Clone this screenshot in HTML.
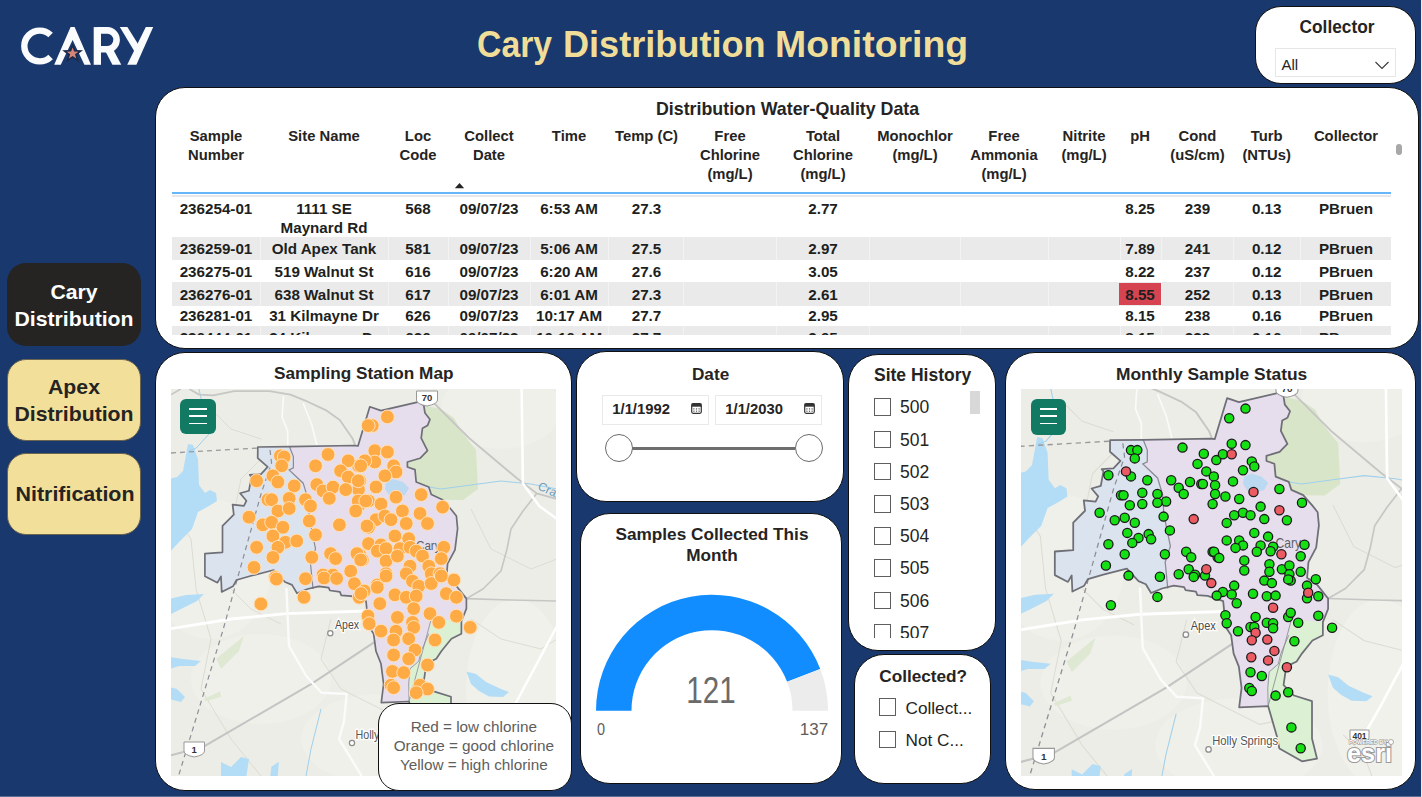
<!DOCTYPE html><html><head><meta charset="utf-8"><style>
html,body{margin:0;padding:0;}
body{width:1422px;height:797px;overflow:hidden;position:relative;background:#19386d;font-family:"Liberation Sans", sans-serif;}
.t{position:absolute;white-space:nowrap;line-height:1;}
.card{position:absolute;box-sizing:border-box;background:#fff;border:1.5px solid #101010;}
</style></head><body>
<div style="position:absolute;left:0px;top:796px;width:1422px;height:1px;background:#5b6f94;"></div>
<div style="position:absolute;left:1421px;top:0px;width:1px;height:797px;background:#e8ebf0;"></div>
<svg style="position:absolute;left:0;top:0" width="170" height="80" viewBox="0 0 170 80">
<path d="M50.6 35.1 A15.4 15.4 0 1 0 50.6 56.9" fill="none" stroke="#fafbfd" stroke-width="6.4"/>
<g fill="#fafbfd">
<polygon points="54.2,64.8 70.6,27.1 74.6,27.1 91,64.8 84.4,64.8 72.6,40 60.8,64.8"/>
<rect x="93.7" y="27.1" width="7.3" height="37.7"/>
<polygon points="104.5,49.5 113.2,49.5 121.3,64.8 112.4,64.8"/>
<polygon points="145.8,27.1 153.2,27.1 136.4,64.8 127.2,64.8"/>
<polygon points="119.8,27.1 127.4,27.1 139.6,46.5 135.4,53"/>
</g>
<path d="M97.3 30.4 H107.5 A9.1 9.45 0 0 1 107.5 49.3 H97.3" fill="none" stroke="#fafbfd" stroke-width="6.6"/>
<polygon points="72.6,43.5 75.3,50.1 83,50.3 76.9,55 79.2,62.3 72.6,58 66,62.3 68.3,55 62.2,50.3 69.9,50.1" fill="#1c2a48"/>
<polygon points="72.6,47.6 74.1,51.6 78.4,51.7 75,54.3 76.3,58.5 72.6,56 68.9,58.5 70.2,54.3 66.8,51.7 71.1,51.6" fill="#d4867a"/>
</svg>
<div class="t" style="left:477.00px;top:26.87px;font-size:36.3px;font-weight:700;color:#f0dd98;transform:scaleX(0.93);transform-origin:left 0;">Cary</div>
<div class="t" style="left:563.00px;top:26.87px;font-size:36.3px;font-weight:700;color:#f0dd98;transform:scaleX(0.995);transform-origin:left 0;">Distribution</div>
<div class="t" style="left:774.60px;top:26.87px;font-size:36.3px;font-weight:700;color:#f0dd98;transform:scaleX(1.03);transform-origin:left 0;">Monitoring</div>
<div class="card" style="left:1255px;top:6px;width:161px;height:77.5px;border-radius:26px;border-width:1.5px;"></div>
<div class="t" style="left:936.50px;width:800px;text-align:center;top:17.59px;font-size:18.2px;font-weight:700;color:#252423;transform:scaleX(0.95);transform-origin:center 0;">Collector</div>
<div style="position:absolute;left:1275px;top:48px;width:121px;height:29px;box-sizing:border-box;border:1px solid #e6e6e6;background:#fff;"></div>
<div class="t" style="left:1281.50px;top:57.10px;font-size:15px;font-weight:400;color:#252423;">All</div>
<svg style="position:absolute;left:1373px;top:58px" width="18" height="14"><path d="M2.5 4 L9 10.5 L15.5 4" fill="none" stroke="#3a3a3a" stroke-width="1.1"/></svg>
<div style="position:absolute;left:7px;top:263px;width:133.7px;height:83px;border-radius:19px;background:#252423;"></div>
<div class="t" style="left:-325.70px;width:800px;text-align:center;top:282.15px;font-size:20.5px;font-weight:700;color:#ffffff;transform:scaleX(1.035);transform-origin:center 0;">Cary</div>
<div class="t" style="left:-325.70px;width:800px;text-align:center;top:309.15px;font-size:20.5px;font-weight:700;color:#ffffff;transform:scaleX(1.035);transform-origin:center 0;">Distribution</div>
<div style="position:absolute;box-sizing:border-box;left:7px;top:359px;width:133.7px;height:81.5px;border-radius:19px;background:#f2df99;border:1px solid #6b6450;"></div>
<div class="t" style="left:-325.70px;width:800px;text-align:center;top:377.15px;font-size:20.5px;font-weight:700;color:#252423;transform:scaleX(1.035);transform-origin:center 0;">Apex</div>
<div class="t" style="left:-325.70px;width:800px;text-align:center;top:403.65px;font-size:20.5px;font-weight:700;color:#252423;transform:scaleX(1.035);transform-origin:center 0;">Distribution</div>
<div style="position:absolute;box-sizing:border-box;left:7px;top:453px;width:133.7px;height:81.5px;border-radius:19px;background:#f2df99;border:1px solid #6b6450;"></div>
<div class="t" style="left:-325.40px;width:800px;text-align:center;top:484.35px;font-size:20.5px;font-weight:700;color:#252423;transform:scaleX(1.045);transform-origin:center 0;">Nitrification</div>
<div class="card" style="left:155px;top:86.5px;width:1263.5px;height:262.5px;border-radius:30px;border-width:1.5px;"></div>
<div class="t" style="left:387.60px;width:800px;text-align:center;top:101.23px;font-size:17.8px;font-weight:700;color:#252423;">Distribution Water-Quality Data</div>
<div class="t" style="left:-184.00px;width:800px;text-align:center;top:128.77px;font-size:14.8px;font-weight:700;color:#252423;">Sample</div>
<div class="t" style="left:-184.00px;width:800px;text-align:center;top:147.97px;font-size:14.8px;font-weight:700;color:#252423;">Number</div>
<div class="t" style="left:-76.00px;width:800px;text-align:center;top:128.77px;font-size:14.8px;font-weight:700;color:#252423;">Site Name</div>
<div class="t" style="left:18.00px;width:800px;text-align:center;top:128.77px;font-size:14.8px;font-weight:700;color:#252423;">Loc</div>
<div class="t" style="left:18.00px;width:800px;text-align:center;top:147.97px;font-size:14.8px;font-weight:700;color:#252423;">Code</div>
<div class="t" style="left:89.00px;width:800px;text-align:center;top:128.77px;font-size:14.8px;font-weight:700;color:#252423;">Collect</div>
<div class="t" style="left:89.00px;width:800px;text-align:center;top:147.97px;font-size:14.8px;font-weight:700;color:#252423;">Date</div>
<div class="t" style="left:169.00px;width:800px;text-align:center;top:128.77px;font-size:14.8px;font-weight:700;color:#252423;">Time</div>
<div class="t" style="left:246.50px;width:800px;text-align:center;top:128.77px;font-size:14.8px;font-weight:700;color:#252423;">Temp (C)</div>
<div class="t" style="left:330.00px;width:800px;text-align:center;top:128.77px;font-size:14.8px;font-weight:700;color:#252423;">Free</div>
<div class="t" style="left:330.00px;width:800px;text-align:center;top:147.97px;font-size:14.8px;font-weight:700;color:#252423;">Chlorine</div>
<div class="t" style="left:330.00px;width:800px;text-align:center;top:167.17px;font-size:14.8px;font-weight:700;color:#252423;">(mg/L)</div>
<div class="t" style="left:423.00px;width:800px;text-align:center;top:128.77px;font-size:14.8px;font-weight:700;color:#252423;">Total</div>
<div class="t" style="left:423.00px;width:800px;text-align:center;top:147.97px;font-size:14.8px;font-weight:700;color:#252423;">Chlorine</div>
<div class="t" style="left:423.00px;width:800px;text-align:center;top:167.17px;font-size:14.8px;font-weight:700;color:#252423;">(mg/L)</div>
<div class="t" style="left:515.00px;width:800px;text-align:center;top:128.77px;font-size:14.8px;font-weight:700;color:#252423;">Monochlor</div>
<div class="t" style="left:515.00px;width:800px;text-align:center;top:147.97px;font-size:14.8px;font-weight:700;color:#252423;">(mg/L)</div>
<div class="t" style="left:604.00px;width:800px;text-align:center;top:128.77px;font-size:14.8px;font-weight:700;color:#252423;">Free</div>
<div class="t" style="left:604.00px;width:800px;text-align:center;top:147.97px;font-size:14.8px;font-weight:700;color:#252423;">Ammonia</div>
<div class="t" style="left:604.00px;width:800px;text-align:center;top:167.17px;font-size:14.8px;font-weight:700;color:#252423;">(mg/L)</div>
<div class="t" style="left:684.00px;width:800px;text-align:center;top:128.77px;font-size:14.8px;font-weight:700;color:#252423;">Nitrite</div>
<div class="t" style="left:684.00px;width:800px;text-align:center;top:147.97px;font-size:14.8px;font-weight:700;color:#252423;">(mg/L)</div>
<div class="t" style="left:740.00px;width:800px;text-align:center;top:128.77px;font-size:14.8px;font-weight:700;color:#252423;">pH</div>
<div class="t" style="left:797.50px;width:800px;text-align:center;top:128.77px;font-size:14.8px;font-weight:700;color:#252423;">Cond</div>
<div class="t" style="left:797.50px;width:800px;text-align:center;top:147.97px;font-size:14.8px;font-weight:700;color:#252423;">(uS/cm)</div>
<div class="t" style="left:866.70px;width:800px;text-align:center;top:128.77px;font-size:14.8px;font-weight:700;color:#252423;">Turb</div>
<div class="t" style="left:866.70px;width:800px;text-align:center;top:147.97px;font-size:14.8px;font-weight:700;color:#252423;">(NTUs)</div>
<div class="t" style="left:946.00px;width:800px;text-align:center;top:128.77px;font-size:14.8px;font-weight:700;color:#252423;">Collector</div>
<svg style="position:absolute;left:454px;top:182px" width="11" height="7"><path d="M0.8 6.3 L5.5 1 L10.2 6.3 Z" fill="#252423"/></svg>
<div style="position:absolute;left:1396px;top:144px;width:5.5px;height:10.5px;background:#a8a8a8;border-radius:3px;"></div>
<div style="position:absolute;left:172px;top:192.2px;width:1219px;height:2.1px;background:#66b6fa;"></div>
<div style="position:absolute;left:172px;top:194.8px;width:1219px;height:2px;background:#e9e8e8;"></div>
<div style="position:absolute;left:0;top:195px;width:1422px;height:139.8px;overflow:hidden;">
<div class="t" style="left:-184.00px;width:800px;text-align:center;top:6.43px;font-size:15.2px;font-weight:700;color:#201f1e;">236254-01</div>
<div class="t" style="left:-76.00px;width:800px;text-align:center;top:6.43px;font-size:15.2px;font-weight:700;color:#201f1e;">1111 SE</div>
<div class="t" style="left:-76.00px;width:800px;text-align:center;top:25.33px;font-size:15.2px;font-weight:700;color:#201f1e;">Maynard Rd</div>
<div class="t" style="left:18.00px;width:800px;text-align:center;top:6.43px;font-size:15.2px;font-weight:700;color:#201f1e;">568</div>
<div class="t" style="left:89.00px;width:800px;text-align:center;top:6.43px;font-size:15.2px;font-weight:700;color:#201f1e;">09/07/23</div>
<div class="t" style="left:169.00px;width:800px;text-align:center;top:6.43px;font-size:15.2px;font-weight:700;color:#201f1e;">6:53 AM</div>
<div class="t" style="left:246.50px;width:800px;text-align:center;top:6.43px;font-size:15.2px;font-weight:700;color:#201f1e;">27.3</div>
<div class="t" style="left:423.00px;width:800px;text-align:center;top:6.43px;font-size:15.2px;font-weight:700;color:#201f1e;">2.77</div>
<div class="t" style="left:740.00px;width:800px;text-align:center;top:6.43px;font-size:15.2px;font-weight:700;color:#201f1e;">8.25</div>
<div class="t" style="left:797.50px;width:800px;text-align:center;top:6.43px;font-size:15.2px;font-weight:700;color:#201f1e;">239</div>
<div class="t" style="left:866.70px;width:800px;text-align:center;top:6.43px;font-size:15.2px;font-weight:700;color:#201f1e;">0.13</div>
<div class="t" style="left:946.00px;width:800px;text-align:center;top:6.43px;font-size:15.2px;font-weight:700;color:#201f1e;">PBruen</div>
<div style="position:absolute;left:172px;top:41.900000000000006px;width:1219px;height:22.799999999999983px;background:#ebeaea;"></div>
<div style="position:absolute;left:260px;top:41.900000000000006px;width:1px;height:22.799999999999983px;background:#f3f3f3;"></div>
<div style="position:absolute;left:387.5px;top:41.900000000000006px;width:1px;height:22.799999999999983px;background:#f3f3f3;"></div>
<div style="position:absolute;left:448.3px;top:41.900000000000006px;width:1px;height:22.799999999999983px;background:#f3f3f3;"></div>
<div style="position:absolute;left:530px;top:41.900000000000006px;width:1px;height:22.799999999999983px;background:#f3f3f3;"></div>
<div style="position:absolute;left:608px;top:41.900000000000006px;width:1px;height:22.799999999999983px;background:#f3f3f3;"></div>
<div style="position:absolute;left:683px;top:41.900000000000006px;width:1px;height:22.799999999999983px;background:#f3f3f3;"></div>
<div style="position:absolute;left:776px;top:41.900000000000006px;width:1px;height:22.799999999999983px;background:#f3f3f3;"></div>
<div style="position:absolute;left:869px;top:41.900000000000006px;width:1px;height:22.799999999999983px;background:#f3f3f3;"></div>
<div style="position:absolute;left:960px;top:41.900000000000006px;width:1px;height:22.799999999999983px;background:#f3f3f3;"></div>
<div style="position:absolute;left:1048px;top:41.900000000000006px;width:1px;height:22.799999999999983px;background:#f3f3f3;"></div>
<div style="position:absolute;left:1120px;top:41.900000000000006px;width:1px;height:22.799999999999983px;background:#f3f3f3;"></div>
<div style="position:absolute;left:1161px;top:41.900000000000006px;width:1px;height:22.799999999999983px;background:#f3f3f3;"></div>
<div style="position:absolute;left:1232.5px;top:41.900000000000006px;width:1px;height:22.799999999999983px;background:#f3f3f3;"></div>
<div style="position:absolute;left:1300px;top:41.900000000000006px;width:1px;height:22.799999999999983px;background:#f3f3f3;"></div>
<div class="t" style="left:-184.00px;width:800px;text-align:center;top:46.43px;font-size:15.2px;font-weight:700;color:#201f1e;">236259-01</div>
<div class="t" style="left:-76.00px;width:800px;text-align:center;top:46.43px;font-size:15.2px;font-weight:700;color:#201f1e;">Old Apex Tank</div>
<div class="t" style="left:18.00px;width:800px;text-align:center;top:46.43px;font-size:15.2px;font-weight:700;color:#201f1e;">581</div>
<div class="t" style="left:89.00px;width:800px;text-align:center;top:46.43px;font-size:15.2px;font-weight:700;color:#201f1e;">09/07/23</div>
<div class="t" style="left:169.00px;width:800px;text-align:center;top:46.43px;font-size:15.2px;font-weight:700;color:#201f1e;">5:06 AM</div>
<div class="t" style="left:246.50px;width:800px;text-align:center;top:46.43px;font-size:15.2px;font-weight:700;color:#201f1e;">27.5</div>
<div class="t" style="left:423.00px;width:800px;text-align:center;top:46.43px;font-size:15.2px;font-weight:700;color:#201f1e;">2.97</div>
<div class="t" style="left:740.00px;width:800px;text-align:center;top:46.43px;font-size:15.2px;font-weight:700;color:#201f1e;">7.89</div>
<div class="t" style="left:797.50px;width:800px;text-align:center;top:46.43px;font-size:15.2px;font-weight:700;color:#201f1e;">241</div>
<div class="t" style="left:866.70px;width:800px;text-align:center;top:46.43px;font-size:15.2px;font-weight:700;color:#201f1e;">0.12</div>
<div class="t" style="left:946.00px;width:800px;text-align:center;top:46.43px;font-size:15.2px;font-weight:700;color:#201f1e;">PBruen</div>
<div class="t" style="left:-184.00px;width:800px;text-align:center;top:69.33px;font-size:15.2px;font-weight:700;color:#201f1e;">236275-01</div>
<div class="t" style="left:-76.00px;width:800px;text-align:center;top:69.33px;font-size:15.2px;font-weight:700;color:#201f1e;">519 Walnut St</div>
<div class="t" style="left:18.00px;width:800px;text-align:center;top:69.33px;font-size:15.2px;font-weight:700;color:#201f1e;">616</div>
<div class="t" style="left:89.00px;width:800px;text-align:center;top:69.33px;font-size:15.2px;font-weight:700;color:#201f1e;">09/07/23</div>
<div class="t" style="left:169.00px;width:800px;text-align:center;top:69.33px;font-size:15.2px;font-weight:700;color:#201f1e;">6:20 AM</div>
<div class="t" style="left:246.50px;width:800px;text-align:center;top:69.33px;font-size:15.2px;font-weight:700;color:#201f1e;">27.6</div>
<div class="t" style="left:423.00px;width:800px;text-align:center;top:69.33px;font-size:15.2px;font-weight:700;color:#201f1e;">3.05</div>
<div class="t" style="left:740.00px;width:800px;text-align:center;top:69.33px;font-size:15.2px;font-weight:700;color:#201f1e;">8.22</div>
<div class="t" style="left:797.50px;width:800px;text-align:center;top:69.33px;font-size:15.2px;font-weight:700;color:#201f1e;">237</div>
<div class="t" style="left:866.70px;width:800px;text-align:center;top:69.33px;font-size:15.2px;font-weight:700;color:#201f1e;">0.12</div>
<div class="t" style="left:946.00px;width:800px;text-align:center;top:69.33px;font-size:15.2px;font-weight:700;color:#201f1e;">PBruen</div>
<div style="position:absolute;left:172px;top:87.10000000000002px;width:1219px;height:23.5px;background:#ebeaea;"></div>
<div style="position:absolute;left:260px;top:87.10000000000002px;width:1px;height:23.5px;background:#f3f3f3;"></div>
<div style="position:absolute;left:387.5px;top:87.10000000000002px;width:1px;height:23.5px;background:#f3f3f3;"></div>
<div style="position:absolute;left:448.3px;top:87.10000000000002px;width:1px;height:23.5px;background:#f3f3f3;"></div>
<div style="position:absolute;left:530px;top:87.10000000000002px;width:1px;height:23.5px;background:#f3f3f3;"></div>
<div style="position:absolute;left:608px;top:87.10000000000002px;width:1px;height:23.5px;background:#f3f3f3;"></div>
<div style="position:absolute;left:683px;top:87.10000000000002px;width:1px;height:23.5px;background:#f3f3f3;"></div>
<div style="position:absolute;left:776px;top:87.10000000000002px;width:1px;height:23.5px;background:#f3f3f3;"></div>
<div style="position:absolute;left:869px;top:87.10000000000002px;width:1px;height:23.5px;background:#f3f3f3;"></div>
<div style="position:absolute;left:960px;top:87.10000000000002px;width:1px;height:23.5px;background:#f3f3f3;"></div>
<div style="position:absolute;left:1048px;top:87.10000000000002px;width:1px;height:23.5px;background:#f3f3f3;"></div>
<div style="position:absolute;left:1120px;top:87.10000000000002px;width:1px;height:23.5px;background:#f3f3f3;"></div>
<div style="position:absolute;left:1161px;top:87.10000000000002px;width:1px;height:23.5px;background:#f3f3f3;"></div>
<div style="position:absolute;left:1232.5px;top:87.10000000000002px;width:1px;height:23.5px;background:#f3f3f3;"></div>
<div style="position:absolute;left:1300px;top:87.10000000000002px;width:1px;height:23.5px;background:#f3f3f3;"></div>
<div style="position:absolute;left:1119.2px;top:88px;width:41.6px;height:21.5px;background:#d64451;"></div>
<div class="t" style="left:-184.00px;width:800px;text-align:center;top:92.43px;font-size:15.2px;font-weight:700;color:#201f1e;">236276-01</div>
<div class="t" style="left:-76.00px;width:800px;text-align:center;top:92.43px;font-size:15.2px;font-weight:700;color:#201f1e;">638 Walnut St</div>
<div class="t" style="left:18.00px;width:800px;text-align:center;top:92.43px;font-size:15.2px;font-weight:700;color:#201f1e;">617</div>
<div class="t" style="left:89.00px;width:800px;text-align:center;top:92.43px;font-size:15.2px;font-weight:700;color:#201f1e;">09/07/23</div>
<div class="t" style="left:169.00px;width:800px;text-align:center;top:92.43px;font-size:15.2px;font-weight:700;color:#201f1e;">6:01 AM</div>
<div class="t" style="left:246.50px;width:800px;text-align:center;top:92.43px;font-size:15.2px;font-weight:700;color:#201f1e;">27.3</div>
<div class="t" style="left:423.00px;width:800px;text-align:center;top:92.43px;font-size:15.2px;font-weight:700;color:#201f1e;">2.61</div>
<div class="t" style="left:740.00px;width:800px;text-align:center;top:92.43px;font-size:15.2px;font-weight:700;color:#201f1e;">8.55</div>
<div class="t" style="left:797.50px;width:800px;text-align:center;top:92.43px;font-size:15.2px;font-weight:700;color:#201f1e;">252</div>
<div class="t" style="left:866.70px;width:800px;text-align:center;top:92.43px;font-size:15.2px;font-weight:700;color:#201f1e;">0.13</div>
<div class="t" style="left:946.00px;width:800px;text-align:center;top:92.43px;font-size:15.2px;font-weight:700;color:#201f1e;">PBruen</div>
<div class="t" style="left:-184.00px;width:800px;text-align:center;top:113.13px;font-size:15.2px;font-weight:700;color:#201f1e;">236281-01</div>
<div class="t" style="left:-76.00px;width:800px;text-align:center;top:113.13px;font-size:15.2px;font-weight:700;color:#201f1e;">31 Kilmayne Dr</div>
<div class="t" style="left:18.00px;width:800px;text-align:center;top:113.13px;font-size:15.2px;font-weight:700;color:#201f1e;">626</div>
<div class="t" style="left:89.00px;width:800px;text-align:center;top:113.13px;font-size:15.2px;font-weight:700;color:#201f1e;">09/07/23</div>
<div class="t" style="left:169.00px;width:800px;text-align:center;top:113.13px;font-size:15.2px;font-weight:700;color:#201f1e;">10:17 AM</div>
<div class="t" style="left:246.50px;width:800px;text-align:center;top:113.13px;font-size:15.2px;font-weight:700;color:#201f1e;">27.7</div>
<div class="t" style="left:423.00px;width:800px;text-align:center;top:113.13px;font-size:15.2px;font-weight:700;color:#201f1e;">2.95</div>
<div class="t" style="left:740.00px;width:800px;text-align:center;top:113.13px;font-size:15.2px;font-weight:700;color:#201f1e;">8.15</div>
<div class="t" style="left:797.50px;width:800px;text-align:center;top:113.13px;font-size:15.2px;font-weight:700;color:#201f1e;">238</div>
<div class="t" style="left:866.70px;width:800px;text-align:center;top:113.13px;font-size:15.2px;font-weight:700;color:#201f1e;">0.16</div>
<div class="t" style="left:946.00px;width:800px;text-align:center;top:113.13px;font-size:15.2px;font-weight:700;color:#201f1e;">PBruen</div>
<div style="position:absolute;left:172px;top:131.2px;width:1219px;height:8.600000000000023px;background:#ebeaea;"></div>
<div style="position:absolute;left:260px;top:131.2px;width:1px;height:8.600000000000023px;background:#f3f3f3;"></div>
<div style="position:absolute;left:387.5px;top:131.2px;width:1px;height:8.600000000000023px;background:#f3f3f3;"></div>
<div style="position:absolute;left:448.3px;top:131.2px;width:1px;height:8.600000000000023px;background:#f3f3f3;"></div>
<div style="position:absolute;left:530px;top:131.2px;width:1px;height:8.600000000000023px;background:#f3f3f3;"></div>
<div style="position:absolute;left:608px;top:131.2px;width:1px;height:8.600000000000023px;background:#f3f3f3;"></div>
<div style="position:absolute;left:683px;top:131.2px;width:1px;height:8.600000000000023px;background:#f3f3f3;"></div>
<div style="position:absolute;left:776px;top:131.2px;width:1px;height:8.600000000000023px;background:#f3f3f3;"></div>
<div style="position:absolute;left:869px;top:131.2px;width:1px;height:8.600000000000023px;background:#f3f3f3;"></div>
<div style="position:absolute;left:960px;top:131.2px;width:1px;height:8.600000000000023px;background:#f3f3f3;"></div>
<div style="position:absolute;left:1048px;top:131.2px;width:1px;height:8.600000000000023px;background:#f3f3f3;"></div>
<div style="position:absolute;left:1120px;top:131.2px;width:1px;height:8.600000000000023px;background:#f3f3f3;"></div>
<div style="position:absolute;left:1161px;top:131.2px;width:1px;height:8.600000000000023px;background:#f3f3f3;"></div>
<div style="position:absolute;left:1232.5px;top:131.2px;width:1px;height:8.600000000000023px;background:#f3f3f3;"></div>
<div style="position:absolute;left:1300px;top:131.2px;width:1px;height:8.600000000000023px;background:#f3f3f3;"></div>
<div class="t" style="left:-184.00px;width:800px;text-align:center;top:135.33px;font-size:15.2px;font-weight:700;color:#201f1e;">236444-01</div>
<div class="t" style="left:-76.00px;width:800px;text-align:center;top:135.33px;font-size:15.2px;font-weight:700;color:#201f1e;">34 Kilmayne Dr</div>
<div class="t" style="left:18.00px;width:800px;text-align:center;top:135.33px;font-size:15.2px;font-weight:700;color:#201f1e;">626</div>
<div class="t" style="left:89.00px;width:800px;text-align:center;top:135.33px;font-size:15.2px;font-weight:700;color:#201f1e;">09/07/23</div>
<div class="t" style="left:169.00px;width:800px;text-align:center;top:135.33px;font-size:15.2px;font-weight:700;color:#201f1e;">10:16 AM</div>
<div class="t" style="left:246.50px;width:800px;text-align:center;top:135.33px;font-size:15.2px;font-weight:700;color:#201f1e;">27.7</div>
<div class="t" style="left:423.00px;width:800px;text-align:center;top:135.33px;font-size:15.2px;font-weight:700;color:#201f1e;">2.95</div>
<div class="t" style="left:740.00px;width:800px;text-align:center;top:135.33px;font-size:15.2px;font-weight:700;color:#201f1e;">8.15</div>
<div class="t" style="left:797.50px;width:800px;text-align:center;top:135.33px;font-size:15.2px;font-weight:700;color:#201f1e;">238</div>
<div class="t" style="left:866.70px;width:800px;text-align:center;top:135.33px;font-size:15.2px;font-weight:700;color:#201f1e;">0.16</div>
<div class="t" style="left:946.00px;width:800px;text-align:center;top:135.33px;font-size:15.2px;font-weight:700;color:#201f1e;">PBruen</div>
</div>
<div class="card" style="left:155px;top:351.5px;width:417px;height:439.5px;border-radius:30px;border-width:1.5px;"></div>
<div class="t" style="left:-36.30px;width:800px;text-align:center;top:364.84px;font-size:17.2px;font-weight:700;color:#252423;">Sampling Station Map</div>
<div id="map1" style="position:absolute;left:171px;top:389px;width:384.5px;height:386.5px;overflow:hidden;background:#edeee8;"><svg width="385" height="387" viewBox="0 0 385 387" style="position:absolute;left:0;top:0">
<rect x="-20" y="-20" width="430" height="430" fill="#ecede6"/>
<ellipse cx="40" cy="180" rx="60" ry="70" fill="#eff0ea"/>
<ellipse cx="210" cy="350" rx="80" ry="45" fill="#eff0e9"/>
<ellipse cx="345" cy="300" rx="50" ry="90" fill="#f0f1eb"/>
<ellipse cx="90" cy="290" rx="70" ry="45" fill="#eff0e9"/>
<ellipse cx="330" cy="20" rx="60" ry="40" fill="#eff0ea"/>
<path d="M0.0 120.0 L20.0 150.0 L25.0 200.0 L40.0 250.0 L30.0 300.0 L60.0 350.0 L90.0 387.0" fill="none" stroke="#dddcd3" stroke-width="1"/>
<path d="M60.0 200.0 L80.0 220.0 L110.0 235.0" fill="none" stroke="#dddcd3" stroke-width="1"/>
<path d="M160.0 230.0 L150.0 270.0 L170.0 300.0 L230.0 330.0 L280.0 320.0" fill="none" stroke="#dddcd3" stroke-width="1"/>
<path d="M300.0 120.0 L320.0 160.0 L360.0 180.0 L386.0 170.0" fill="none" stroke="#dddcd3" stroke-width="1"/>
<path d="M300.0 230.0 L330.0 250.0 L370.0 260.0 L386.0 250.0" fill="none" stroke="#dddcd3" stroke-width="1"/>
<path d="M310.0 340.0 L330.0 360.0 L340.0 387.0" fill="none" stroke="#dddcd3" stroke-width="1"/>
<path d="M100.0 60.0 L70.0 90.0 L60.0 140.0" fill="none" stroke="#dddcd3" stroke-width="1"/>
<path d="M40.0 20.0 L60.0 40.0 L90.0 50.0" fill="none" stroke="#dddcd3" stroke-width="1"/>
<polygon points="252.8,16.6 270.0,20.0 283.0,29.0 290.0,42.0 305.0,61.0 307.0,100.0 292.0,111.0 271.6,110.7 260.3,105.6 257.8,98.0 245.2,93.0 244.0,80.6 236.4,78.0 236.4,73.0 249.0,69.3 256.5,61.7 250.2,49.2 251.5,39.2 256.5,36.6 259.0,30.4 254.0,24.0" fill="#d9e5c9"/>
<polygon points="17.0,55.0 22.0,56.0 27.0,70.0 28.0,96.0 34.0,104.0 39.0,101.0 45.0,104.0 46.0,112.0 38.0,117.0 27.0,123.0 21.0,140.0 9.0,152.0 -2.0,164.0 -2.0,90.0 6.0,88.0 12.0,82.0 15.0,66.0" fill="#b3ddf6"/>
<polygon points="295.4,282.4 305.0,285.0 315.0,293.0 330.0,300.0 338.0,303.0 332.0,308.0 318.0,307.5 308.0,302.0 300.0,295.0" fill="#b3ddf6"/>
<polygon points="50.0,373.0 60.0,378.0 70.0,368.0 78.0,370.0 75.0,390.0 50.0,390.0" fill="#b3ddf6"/>
<polygon points="100.4,377.7 107.9,372.7 106.6,390.0 99.0,390.0" fill="#b3ddf6"/>
<polygon points="45.2,269.8 72.8,247.2 67.8,262.3 50.2,279.8" fill="#dfe8d2"/>
<polygon points="32.6,310.0 49.0,302.4 50.2,307.5 35.0,312.5" fill="#dfe8d2"/>
<polygon points="-2.0,210.0 15.0,206.0 33.0,205.0 26.0,212.0 10.0,220.0 -2.0,226.0" fill="#b3ddf6"/>
<polygon points="-2.0,268.0 12.0,270.0 30.0,272.0 24.0,277.0 8.0,277.0 -2.0,280.0" fill="#b3ddf6"/>
<polygon points="-2.0,298.0 6.0,300.0 14.0,308.0 10.0,313.0 -2.0,310.0" fill="#b3ddf6"/>
<path d="M28 0 L38 45 L25.3 59 L18 62" fill="none" stroke="#9fd0ec" stroke-width="1"/>
<path d="M240 95 L270 100 L300 96 L330 92 L360 95 L386 100" fill="none" stroke="#9fd0ec" stroke-width="1"/>
<path d="M150 320 L140 360 L135 387" fill="none" stroke="#9fd0ec" stroke-width="1"/>
<path d="M18.3 0.0 L28.1 5.6 L42.2 6.3 L63.3 2.1 L98.5 2.1 L119.5 5.6 L133.6 11.3 L154.7 21.1 L168.8 31.0 L181.4 49.2 L184.2 56.3" fill="none" stroke="#c6c7c5" stroke-width="1.8" stroke-linejoin="round"/>
<path d="M0.0 5.6 L9.8 0.0" fill="none" stroke="#c6c7c5" stroke-width="1.6" stroke-linejoin="round"/>
<path d="M257.8 9.0 L298.0 49.0 L345.6 89.0 L365.7 104.4 L386.0 110.0" fill="none" stroke="#c6c7c5" stroke-width="1.8" stroke-linejoin="round"/>
<path d="M365.7 104.4 L352.0 122.0 L340.0 140.0 L336.0 160.0 L330.0 182.0 L312.0 200.0 L295.4 209.6" fill="none" stroke="#c6c7c5" stroke-width="1.6" stroke-linejoin="round"/>
<path d="M0.0 366.4 L32.6 357.6 L140.5 294.9 L200.8 254.8 L215.0 245.0" fill="none" stroke="#c3c4c3" stroke-width="2.0" stroke-linejoin="round"/>
<path d="M295.4 209.6 L340.0 211.0 L386.0 212.0" fill="none" stroke="#c6c7c5" stroke-width="1.6" stroke-linejoin="round"/>
<path d="M0.0 239.7 L60.0 230.0 L115.4 224.6 L195.7 222.0 L210.0 222.0" fill="none" stroke="#ffffff" stroke-width="2.8" stroke-linejoin="round"/>
<path d="M115.4 199.0 L118.0 257.0 L135.5 287.4 L150.6 303.7 L175.7 305.0 L173.0 332.5 L168.0 350.0 L190.7 387.0" fill="none" stroke="#fbfbfb" stroke-width="2.4" stroke-linejoin="round"/>
<path d="M112.5 7.0 L111.1 28.1 L116.7 42.2 L116.7 57.7" fill="none" stroke="#fafafa" stroke-width="1.6" stroke-linejoin="round"/>
<path d="M132.2 14.0 L140.6 35.2 L146.3 57.7" fill="none" stroke="#fafafa" stroke-width="1.6" stroke-linejoin="round"/>
<path d="M350.6 -1.0 L351.9 94.4 L368.2 117.0 L386.0 130.0" fill="none" stroke="#ffffff" stroke-width="2.5" stroke-linejoin="round"/>
<path d="M386.0 237.0 L345.6 312.5 L330.0 340.0" fill="none" stroke="#ffffff" stroke-width="2.5" stroke-linejoin="round"/>
<path d="M0.0 64.0 L87.0 59.0" fill="none" stroke="#9a9a9a" stroke-width="1.3" stroke-dasharray="5 4"/>
<polygon points="86.8,58.0 118.5,57.7 183.4,56.5 187.0,57.0 198.8,17.8 210.0,21.6 247.7,12.8 252.8,16.6 254.0,24.0 259.0,30.4 256.5,36.6 251.5,39.2 250.2,49.2 256.5,61.7 249.0,69.3 236.4,73.0 236.4,78.0 244.0,80.6 245.2,93.0 257.8,98.0 260.3,105.6 271.6,110.7 280.4,120.7 285.4,127.0 286.6,139.5 284.0,160.9 276.6,174.7 275.3,189.7 285.4,197.0 295.4,209.6 295.4,219.6 290.4,232.2 290.4,244.7 280.4,249.7 270.3,262.3 265.3,269.8 255.3,274.8 252.8,292.4 262.8,302.4 280.0,307.8 280.0,343.6 284.8,362.8 270.4,365.4 248.8,353.2 246.4,341.3 238.0,312.5 210.3,313.7 212.6,295.0 210.0,274.8 205.0,262.3 202.6,244.7 197.5,237.0 195.0,212.0 180.1,207.1 170.3,206.4 168.9,202.9 159.0,201.5 157.6,198.7 147.8,197.3 136.5,200.0 126.0,204.3 121.0,195.9 114.0,193.0 102.8,181.0 80.3,186.7 65.5,191.0 62.0,197.3 50.7,202.9 50.0,187.4 46.5,193.7 33.9,187.2 33.9,164.6 51.5,163.3 51.5,136.9 62.8,125.6 61.6,115.6 72.9,116.8 75.4,111.8 69.1,104.3 77.9,101.8 80.4,87.9 78.8,85.8 90.0,85.1 96.7,77.9 86.7,69.1" fill="#e5dded" fill-opacity="0.93"/>
<polygon points="136.5,200.0 126.0,204.3 121.0,195.9 114.0,193.0 102.8,181.0 80.3,186.7 65.5,191.0 62.0,197.3 50.7,202.9 50.0,187.4 46.5,193.7 33.9,187.2 33.9,164.6 51.5,163.3 51.5,136.9 62.8,125.6 61.6,115.6 72.9,116.8 75.4,111.8 69.1,104.3 77.9,101.8 80.4,87.9 78.8,85.8 90.0,85.1 96.7,77.9 86.7,69.1 86.8,58.0 118.5,57.7 122.4,67.5 122.4,78.8 118.1,80.9 132.2,94.2 137.0,110.0 138.3,129.5 144.5,159.6 139.5,174.7 142.0,200.0" fill="#dbe3ee"/>
<polygon points="260.3,229.7 290.4,232.2 290.4,244.7 280.4,249.7 270.3,262.3 265.3,269.8 255.3,274.8 252.8,292.4 262.8,302.4 280.0,307.8 280.0,343.6 284.8,362.8 270.4,365.4 248.8,353.2 246.4,341.3 238.0,312.5 237.7,295.0 239.0,279.8 247.7,272.3 250.2,262.3 257.8,244.7" fill="#dcf0d3"/>
<path d="M118.5 57.7 L122.4 67.5 L122.4 78.8 L118.1 80.9 L132.2 94.2 L137.0 110.0 L138.3 129.5 L144.5 159.6 L139.5 174.7 L142.0 200.0" fill="none" stroke="#8a8a93" stroke-width="1.2"/>
<path d="M260.3 229.7 L238.0 312.5 L237.7 295.0 L239.0 279.8 L247.7 272.3 L250.2 262.3 L257.8 244.7" fill="none" stroke="#8a8a93" stroke-width="0.8"/>
<polygon points="215.0,93.0 222.0,90.0 232.0,93.0 238.0,99.0 234.0,106.0 226.0,108.0 218.0,106.0 214.0,100.0" fill="#bcd9f2"/>
<path d="M99.0 61.0 L100.6 74.0 L90.0 105.0 L80.0 141.0 L52.0 241.0 L7.5 387.0" fill="none" stroke="#8e8e96" stroke-width="1.2" stroke-dasharray="5 4"/>
<polygon points="86.8,58.0 118.5,57.7 183.4,56.5 187.0,57.0 198.8,17.8 210.0,21.6 247.7,12.8 252.8,16.6 254.0,24.0 259.0,30.4 256.5,36.6 251.5,39.2 250.2,49.2 256.5,61.7 249.0,69.3 236.4,73.0 236.4,78.0 244.0,80.6 245.2,93.0 257.8,98.0 260.3,105.6 271.6,110.7 280.4,120.7 285.4,127.0 286.6,139.5 284.0,160.9 276.6,174.7 275.3,189.7 285.4,197.0 295.4,209.6 295.4,219.6 290.4,232.2 290.4,244.7 280.4,249.7 270.3,262.3 265.3,269.8 255.3,274.8 252.8,292.4 262.8,302.4 280.0,307.8 280.0,343.6 284.8,362.8 270.4,365.4 248.8,353.2 246.4,341.3 238.0,312.5 210.3,313.7 212.6,295.0 210.0,274.8 205.0,262.3 202.6,244.7 197.5,237.0 195.0,212.0 180.1,207.1 170.3,206.4 168.9,202.9 159.0,201.5 157.6,198.7 147.8,197.3 136.5,200.0 126.0,204.3 121.0,195.9 114.0,193.0 102.8,181.0 80.3,186.7 65.5,191.0 62.0,197.3 50.7,202.9 50.0,187.4 46.5,193.7 33.9,187.2 33.9,164.6 51.5,163.3 51.5,136.9 62.8,125.6 61.6,115.6 72.9,116.8 75.4,111.8 69.1,104.3 77.9,101.8 80.4,87.9 78.8,85.8 90.0,85.1 96.7,77.9 86.7,69.1" fill="none" stroke="#6f6f78" stroke-width="1.7" stroke-linejoin="round"/>
<circle cx="159.3" cy="244.2" r="2.6" fill="#fff" stroke="#8c8c8c" stroke-width="1.2"/>
<text x="164" y="239.5" font-family="Liberation Sans" font-size="12.5" textLength="24" lengthAdjust="spacingAndGlyphs" fill="#4a4a4a" stroke="#fff" stroke-width="2.5" paint-order="stroke">Apex</text>
<circle cx="181" cy="354" r="2.6" fill="#fff" stroke="#8c8c8c" stroke-width="1.2"/>
<text x="184.5" y="349.5" font-family="Liberation Sans" font-size="12.5" textLength="63" lengthAdjust="spacingAndGlyphs" fill="#555" stroke="#fff" stroke-width="2.5" paint-order="stroke">Holly Springs</text>
<text x="245" y="161" font-family="Liberation Sans" font-size="13.5" textLength="24.5" lengthAdjust="spacingAndGlyphs" fill="#5f5f66">Cary</text>
<text x="366" y="100" font-family="Liberation Sans" font-size="12" fill="#6a9bc0" transform="rotate(25 366 100)">Crabtree</text>
<path d="M245.5 2 h21 v9 q0 4 -10.5 6 q-10.5 -2 -10.5 -6 z" fill="#fff" stroke="#999" stroke-width="1"/>
<text x="256" y="12" font-family="Liberation Sans" font-size="9.5" font-weight="700" text-anchor="middle" fill="#333">70</text>
<path d="M13 353 h20.5 v9 q0 4 -10.25 6 q-10.25 -2 -10.25 -6 z" fill="#fff" stroke="#999" stroke-width="1"/>
<text x="23.2" y="364" font-family="Liberation Sans" font-size="9.5" font-weight="700" text-anchor="middle" fill="#333">1</text>
<circle cx="216.4" cy="27.9" r="6.9" fill="#ffab45" stroke="#ffe2bd" stroke-width="1"/>
<circle cx="201.3" cy="36.6" r="6.9" fill="#ffab45" stroke="#ffe2bd" stroke-width="1"/>
<circle cx="203.8" cy="61.7" r="6.9" fill="#ffab45" stroke="#ffe2bd" stroke-width="1"/>
<circle cx="216.4" cy="63.0" r="6.9" fill="#ffab45" stroke="#ffe2bd" stroke-width="1"/>
<circle cx="203.8" cy="73.0" r="6.9" fill="#ffab45" stroke="#ffe2bd" stroke-width="1"/>
<circle cx="193.8" cy="71.8" r="6.9" fill="#ffab45" stroke="#ffe2bd" stroke-width="1"/>
<circle cx="187.5" cy="76.8" r="6.9" fill="#ffab45" stroke="#ffe2bd" stroke-width="1"/>
<circle cx="222.6" cy="76.8" r="6.9" fill="#ffab45" stroke="#ffe2bd" stroke-width="1"/>
<circle cx="225.0" cy="83.0" r="6.9" fill="#ffab45" stroke="#ffe2bd" stroke-width="1"/>
<circle cx="213.9" cy="86.8" r="6.9" fill="#ffab45" stroke="#ffe2bd" stroke-width="1"/>
<circle cx="188.8" cy="91.8" r="6.9" fill="#ffab45" stroke="#ffe2bd" stroke-width="1"/>
<circle cx="205.0" cy="98.0" r="6.9" fill="#ffab45" stroke="#ffe2bd" stroke-width="1"/>
<circle cx="187.5" cy="100.6" r="6.9" fill="#ffab45" stroke="#ffe2bd" stroke-width="1"/>
<circle cx="225.0" cy="108.2" r="6.9" fill="#ffab45" stroke="#ffe2bd" stroke-width="1"/>
<circle cx="250.2" cy="105.6" r="6.9" fill="#ffab45" stroke="#ffe2bd" stroke-width="1"/>
<circle cx="197.5" cy="111.9" r="6.9" fill="#ffab45" stroke="#ffe2bd" stroke-width="1"/>
<circle cx="210.0" cy="115.0" r="6.9" fill="#ffab45" stroke="#ffe2bd" stroke-width="1"/>
<circle cx="187.5" cy="117.0" r="6.9" fill="#ffab45" stroke="#ffe2bd" stroke-width="1"/>
<circle cx="231.4" cy="122.0" r="6.9" fill="#ffab45" stroke="#ffe2bd" stroke-width="1"/>
<circle cx="249.0" cy="124.5" r="6.9" fill="#ffab45" stroke="#ffe2bd" stroke-width="1"/>
<circle cx="271.6" cy="118.2" r="6.9" fill="#ffab45" stroke="#ffe2bd" stroke-width="1"/>
<circle cx="205.0" cy="130.7" r="6.9" fill="#ffab45" stroke="#ffe2bd" stroke-width="1"/>
<circle cx="213.9" cy="127.0" r="6.9" fill="#ffab45" stroke="#ffe2bd" stroke-width="1"/>
<circle cx="220.0" cy="130.7" r="6.9" fill="#ffab45" stroke="#ffe2bd" stroke-width="1"/>
<circle cx="235.2" cy="134.5" r="6.9" fill="#ffab45" stroke="#ffe2bd" stroke-width="1"/>
<circle cx="256.5" cy="134.5" r="6.9" fill="#ffab45" stroke="#ffe2bd" stroke-width="1"/>
<circle cx="197.5" cy="138.3" r="6.9" fill="#ffab45" stroke="#ffe2bd" stroke-width="1"/>
<circle cx="223.9" cy="147.0" r="6.9" fill="#ffab45" stroke="#ffe2bd" stroke-width="1"/>
<circle cx="237.7" cy="149.6" r="6.9" fill="#ffab45" stroke="#ffe2bd" stroke-width="1"/>
<circle cx="197.5" cy="154.6" r="6.9" fill="#ffab45" stroke="#ffe2bd" stroke-width="1"/>
<circle cx="210.0" cy="155.8" r="6.9" fill="#ffab45" stroke="#ffe2bd" stroke-width="1"/>
<circle cx="206.3" cy="162.1" r="6.9" fill="#ffab45" stroke="#ffe2bd" stroke-width="1"/>
<circle cx="215.0" cy="159.6" r="6.9" fill="#ffab45" stroke="#ffe2bd" stroke-width="1"/>
<circle cx="228.9" cy="159.6" r="6.9" fill="#ffab45" stroke="#ffe2bd" stroke-width="1"/>
<circle cx="239.0" cy="158.3" r="6.9" fill="#ffab45" stroke="#ffe2bd" stroke-width="1"/>
<circle cx="245.2" cy="162.1" r="6.9" fill="#ffab45" stroke="#ffe2bd" stroke-width="1"/>
<circle cx="251.5" cy="167.1" r="6.9" fill="#ffab45" stroke="#ffe2bd" stroke-width="1"/>
<circle cx="272.8" cy="158.3" r="6.9" fill="#ffab45" stroke="#ffe2bd" stroke-width="1"/>
<circle cx="188.8" cy="165.9" r="6.9" fill="#ffab45" stroke="#ffe2bd" stroke-width="1"/>
<circle cx="191.3" cy="170.9" r="6.9" fill="#ffab45" stroke="#ffe2bd" stroke-width="1"/>
<circle cx="215.0" cy="172.1" r="6.9" fill="#ffab45" stroke="#ffe2bd" stroke-width="1"/>
<circle cx="226.4" cy="167.1" r="6.9" fill="#ffab45" stroke="#ffe2bd" stroke-width="1"/>
<circle cx="239.0" cy="177.2" r="6.9" fill="#ffab45" stroke="#ffe2bd" stroke-width="1"/>
<circle cx="257.8" cy="177.2" r="6.9" fill="#ffab45" stroke="#ffe2bd" stroke-width="1"/>
<circle cx="270.3" cy="169.6" r="6.9" fill="#ffab45" stroke="#ffe2bd" stroke-width="1"/>
<circle cx="215.0" cy="184.7" r="6.9" fill="#ffab45" stroke="#ffe2bd" stroke-width="1"/>
<circle cx="235.2" cy="184.7" r="6.9" fill="#ffab45" stroke="#ffe2bd" stroke-width="1"/>
<circle cx="241.5" cy="192.2" r="6.9" fill="#ffab45" stroke="#ffe2bd" stroke-width="1"/>
<circle cx="260.3" cy="184.7" r="6.9" fill="#ffab45" stroke="#ffe2bd" stroke-width="1"/>
<circle cx="269.0" cy="184.7" r="6.9" fill="#ffab45" stroke="#ffe2bd" stroke-width="1"/>
<circle cx="282.9" cy="191.0" r="6.9" fill="#ffab45" stroke="#ffe2bd" stroke-width="1"/>
<circle cx="206.3" cy="196.0" r="6.9" fill="#ffab45" stroke="#ffe2bd" stroke-width="1"/>
<circle cx="247.7" cy="197.2" r="6.9" fill="#ffab45" stroke="#ffe2bd" stroke-width="1"/>
<circle cx="109.4" cy="66.8" r="6.9" fill="#ffab45" stroke="#ffe2bd" stroke-width="1"/>
<circle cx="113.2" cy="68.0" r="6.9" fill="#ffab45" stroke="#ffe2bd" stroke-width="1"/>
<circle cx="110.7" cy="76.8" r="6.9" fill="#ffab45" stroke="#ffe2bd" stroke-width="1"/>
<circle cx="144.5" cy="76.8" r="6.9" fill="#ffab45" stroke="#ffe2bd" stroke-width="1"/>
<circle cx="157.0" cy="65.5" r="6.9" fill="#ffab45" stroke="#ffe2bd" stroke-width="1"/>
<circle cx="177.2" cy="71.8" r="6.9" fill="#ffab45" stroke="#ffe2bd" stroke-width="1"/>
<circle cx="189.7" cy="76.8" r="6.9" fill="#ffab45" stroke="#ffe2bd" stroke-width="1"/>
<circle cx="197.2" cy="36.6" r="6.9" fill="#ffab45" stroke="#ffe2bd" stroke-width="1"/>
<circle cx="169.6" cy="81.8" r="6.9" fill="#ffab45" stroke="#ffe2bd" stroke-width="1"/>
<circle cx="177.2" cy="88.0" r="6.9" fill="#ffab45" stroke="#ffe2bd" stroke-width="1"/>
<circle cx="187.2" cy="91.8" r="6.9" fill="#ffab45" stroke="#ffe2bd" stroke-width="1"/>
<circle cx="85.6" cy="91.8" r="6.9" fill="#ffab45" stroke="#ffe2bd" stroke-width="1"/>
<circle cx="101.9" cy="86.8" r="6.9" fill="#ffab45" stroke="#ffe2bd" stroke-width="1"/>
<circle cx="106.9" cy="93.0" r="6.9" fill="#ffab45" stroke="#ffe2bd" stroke-width="1"/>
<circle cx="123.2" cy="96.9" r="6.9" fill="#ffab45" stroke="#ffe2bd" stroke-width="1"/>
<circle cx="145.8" cy="95.6" r="6.9" fill="#ffab45" stroke="#ffe2bd" stroke-width="1"/>
<circle cx="152.0" cy="101.9" r="6.9" fill="#ffab45" stroke="#ffe2bd" stroke-width="1"/>
<circle cx="162.0" cy="98.1" r="6.9" fill="#ffab45" stroke="#ffe2bd" stroke-width="1"/>
<circle cx="174.7" cy="100.6" r="6.9" fill="#ffab45" stroke="#ffe2bd" stroke-width="1"/>
<circle cx="96.9" cy="110.7" r="6.9" fill="#ffab45" stroke="#ffe2bd" stroke-width="1"/>
<circle cx="100.6" cy="110.7" r="6.9" fill="#ffab45" stroke="#ffe2bd" stroke-width="1"/>
<circle cx="118.2" cy="109.4" r="6.9" fill="#ffab45" stroke="#ffe2bd" stroke-width="1"/>
<circle cx="134.5" cy="110.7" r="6.9" fill="#ffab45" stroke="#ffe2bd" stroke-width="1"/>
<circle cx="139.5" cy="117.0" r="6.9" fill="#ffab45" stroke="#ffe2bd" stroke-width="1"/>
<circle cx="158.3" cy="109.4" r="6.9" fill="#ffab45" stroke="#ffe2bd" stroke-width="1"/>
<circle cx="187.2" cy="112.0" r="6.9" fill="#ffab45" stroke="#ffe2bd" stroke-width="1"/>
<circle cx="194.7" cy="112.0" r="6.9" fill="#ffab45" stroke="#ffe2bd" stroke-width="1"/>
<circle cx="106.9" cy="122.0" r="6.9" fill="#ffab45" stroke="#ffe2bd" stroke-width="1"/>
<circle cx="118.2" cy="119.5" r="6.9" fill="#ffab45" stroke="#ffe2bd" stroke-width="1"/>
<circle cx="184.7" cy="122.0" r="6.9" fill="#ffab45" stroke="#ffe2bd" stroke-width="1"/>
<circle cx="78.0" cy="128.2" r="6.9" fill="#ffab45" stroke="#ffe2bd" stroke-width="1"/>
<circle cx="91.8" cy="135.8" r="6.9" fill="#ffab45" stroke="#ffe2bd" stroke-width="1"/>
<circle cx="100.6" cy="133.3" r="6.9" fill="#ffab45" stroke="#ffe2bd" stroke-width="1"/>
<circle cx="111.9" cy="138.3" r="6.9" fill="#ffab45" stroke="#ffe2bd" stroke-width="1"/>
<circle cx="138.3" cy="132.0" r="6.9" fill="#ffab45" stroke="#ffe2bd" stroke-width="1"/>
<circle cx="168.4" cy="135.8" r="6.9" fill="#ffab45" stroke="#ffe2bd" stroke-width="1"/>
<circle cx="196.0" cy="137.0" r="6.9" fill="#ffab45" stroke="#ffe2bd" stroke-width="1"/>
<circle cx="101.9" cy="147.0" r="6.9" fill="#ffab45" stroke="#ffe2bd" stroke-width="1"/>
<circle cx="144.5" cy="145.8" r="6.9" fill="#ffab45" stroke="#ffe2bd" stroke-width="1"/>
<circle cx="114.4" cy="153.3" r="6.9" fill="#ffab45" stroke="#ffe2bd" stroke-width="1"/>
<circle cx="125.7" cy="152.0" r="6.9" fill="#ffab45" stroke="#ffe2bd" stroke-width="1"/>
<circle cx="85.6" cy="158.3" r="6.9" fill="#ffab45" stroke="#ffe2bd" stroke-width="1"/>
<circle cx="106.9" cy="158.3" r="6.9" fill="#ffab45" stroke="#ffe2bd" stroke-width="1"/>
<circle cx="159.6" cy="164.6" r="6.9" fill="#ffab45" stroke="#ffe2bd" stroke-width="1"/>
<circle cx="164.6" cy="169.6" r="6.9" fill="#ffab45" stroke="#ffe2bd" stroke-width="1"/>
<circle cx="186.0" cy="164.6" r="6.9" fill="#ffab45" stroke="#ffe2bd" stroke-width="1"/>
<circle cx="189.7" cy="170.9" r="6.9" fill="#ffab45" stroke="#ffe2bd" stroke-width="1"/>
<circle cx="101.9" cy="168.4" r="6.9" fill="#ffab45" stroke="#ffe2bd" stroke-width="1"/>
<circle cx="140.8" cy="168.4" r="6.9" fill="#ffab45" stroke="#ffe2bd" stroke-width="1"/>
<circle cx="83.0" cy="178.4" r="6.9" fill="#ffab45" stroke="#ffe2bd" stroke-width="1"/>
<circle cx="134.5" cy="189.7" r="6.9" fill="#ffab45" stroke="#ffe2bd" stroke-width="1"/>
<circle cx="104.4" cy="188.5" r="6.9" fill="#ffab45" stroke="#ffe2bd" stroke-width="1"/>
<circle cx="152.0" cy="186.0" r="6.9" fill="#ffab45" stroke="#ffe2bd" stroke-width="1"/>
<circle cx="162.0" cy="186.0" r="6.9" fill="#ffab45" stroke="#ffe2bd" stroke-width="1"/>
<circle cx="179.7" cy="182.2" r="6.9" fill="#ffab45" stroke="#ffe2bd" stroke-width="1"/>
<circle cx="183.4" cy="194.7" r="6.9" fill="#ffab45" stroke="#ffe2bd" stroke-width="1"/>
<circle cx="105.4" cy="190.0" r="6.9" fill="#ffab45" stroke="#ffe2bd" stroke-width="1"/>
<circle cx="133.0" cy="208.3" r="6.9" fill="#ffab45" stroke="#ffe2bd" stroke-width="1"/>
<circle cx="89.9" cy="214.9" r="6.9" fill="#ffab45" stroke="#ffe2bd" stroke-width="1"/>
<circle cx="153.0" cy="189.0" r="6.9" fill="#ffab45" stroke="#ffe2bd" stroke-width="1"/>
<circle cx="165.6" cy="189.5" r="6.9" fill="#ffab45" stroke="#ffe2bd" stroke-width="1"/>
<circle cx="193.2" cy="202.0" r="6.9" fill="#ffab45" stroke="#ffe2bd" stroke-width="1"/>
<circle cx="188.2" cy="208.3" r="6.9" fill="#ffab45" stroke="#ffe2bd" stroke-width="1"/>
<circle cx="197.0" cy="227.0" r="6.9" fill="#ffab45" stroke="#ffe2bd" stroke-width="1"/>
<circle cx="198.2" cy="234.7" r="6.9" fill="#ffab45" stroke="#ffe2bd" stroke-width="1"/>
<circle cx="215.0" cy="187.0" r="6.9" fill="#ffab45" stroke="#ffe2bd" stroke-width="1"/>
<circle cx="260.3" cy="194.5" r="6.9" fill="#ffab45" stroke="#ffe2bd" stroke-width="1"/>
<circle cx="270.3" cy="187.0" r="6.9" fill="#ffab45" stroke="#ffe2bd" stroke-width="1"/>
<circle cx="206.3" cy="198.3" r="6.9" fill="#ffab45" stroke="#ffe2bd" stroke-width="1"/>
<circle cx="190.0" cy="204.6" r="6.9" fill="#ffab45" stroke="#ffe2bd" stroke-width="1"/>
<circle cx="223.9" cy="205.8" r="6.9" fill="#ffab45" stroke="#ffe2bd" stroke-width="1"/>
<circle cx="235.2" cy="208.3" r="6.9" fill="#ffab45" stroke="#ffe2bd" stroke-width="1"/>
<circle cx="245.2" cy="207.0" r="6.9" fill="#ffab45" stroke="#ffe2bd" stroke-width="1"/>
<circle cx="275.3" cy="204.6" r="6.9" fill="#ffab45" stroke="#ffe2bd" stroke-width="1"/>
<circle cx="285.4" cy="208.3" r="6.9" fill="#ffab45" stroke="#ffe2bd" stroke-width="1"/>
<circle cx="208.8" cy="214.6" r="6.9" fill="#ffab45" stroke="#ffe2bd" stroke-width="1"/>
<circle cx="242.7" cy="219.6" r="6.9" fill="#ffab45" stroke="#ffe2bd" stroke-width="1"/>
<circle cx="259.0" cy="224.6" r="6.9" fill="#ffab45" stroke="#ffe2bd" stroke-width="1"/>
<circle cx="285.4" cy="227.2" r="6.9" fill="#ffab45" stroke="#ffe2bd" stroke-width="1"/>
<circle cx="226.4" cy="228.4" r="6.9" fill="#ffab45" stroke="#ffe2bd" stroke-width="1"/>
<circle cx="241.5" cy="233.4" r="6.9" fill="#ffab45" stroke="#ffe2bd" stroke-width="1"/>
<circle cx="267.8" cy="233.4" r="6.9" fill="#ffab45" stroke="#ffe2bd" stroke-width="1"/>
<circle cx="299.2" cy="238.4" r="6.9" fill="#ffab45" stroke="#ffe2bd" stroke-width="1"/>
<circle cx="210.0" cy="242.2" r="6.9" fill="#ffab45" stroke="#ffe2bd" stroke-width="1"/>
<circle cx="225.0" cy="242.2" r="6.9" fill="#ffab45" stroke="#ffe2bd" stroke-width="1"/>
<circle cx="242.7" cy="238.4" r="6.9" fill="#ffab45" stroke="#ffe2bd" stroke-width="1"/>
<circle cx="264.0" cy="251.0" r="6.9" fill="#ffab45" stroke="#ffe2bd" stroke-width="1"/>
<circle cx="222.6" cy="251.0" r="6.9" fill="#ffab45" stroke="#ffe2bd" stroke-width="1"/>
<circle cx="237.7" cy="249.7" r="6.9" fill="#ffab45" stroke="#ffe2bd" stroke-width="1"/>
<circle cx="244.0" cy="261.0" r="6.9" fill="#ffab45" stroke="#ffe2bd" stroke-width="1"/>
<circle cx="222.6" cy="266.0" r="6.9" fill="#ffab45" stroke="#ffe2bd" stroke-width="1"/>
<circle cx="237.7" cy="269.8" r="6.9" fill="#ffab45" stroke="#ffe2bd" stroke-width="1"/>
<circle cx="256.5" cy="276.0" r="6.9" fill="#ffab45" stroke="#ffe2bd" stroke-width="1"/>
<circle cx="221.4" cy="282.4" r="6.9" fill="#ffab45" stroke="#ffe2bd" stroke-width="1"/>
<circle cx="232.7" cy="283.6" r="6.9" fill="#ffab45" stroke="#ffe2bd" stroke-width="1"/>
<circle cx="220.0" cy="296.2" r="6.9" fill="#ffab45" stroke="#ffe2bd" stroke-width="1"/>
<circle cx="222.6" cy="298.7" r="6.9" fill="#ffab45" stroke="#ffe2bd" stroke-width="1"/>
<circle cx="249.0" cy="296.2" r="6.9" fill="#ffab45" stroke="#ffe2bd" stroke-width="1"/>
<circle cx="256.5" cy="300.0" r="6.9" fill="#ffab45" stroke="#ffe2bd" stroke-width="1"/>
<circle cx="245.2" cy="303.7" r="6.9" fill="#ffab45" stroke="#ffe2bd" stroke-width="1"/>
</svg></div>
<div style="position:absolute;left:180.2px;top:398.9px;width:35.5px;height:35.5px;border-radius:6px;background:#127a63;"></div>
<div style="position:absolute;left:189.2px;top:408.2px;width:17.5px;height:1.7px;background:#ffffff;"></div>
<div style="position:absolute;left:189.2px;top:415.29999999999995px;width:17.5px;height:1.7px;background:#ffffff;"></div>
<div style="position:absolute;left:189.2px;top:422.5px;width:17.5px;height:1.7px;background:#ffffff;"></div>
<div class="card" style="left:377.5px;top:703px;width:194.5px;height:88px;border-radius:21px;"></div>
<div class="t" style="left:73.80px;width:800px;text-align:center;top:718.55px;font-size:15.3px;font-weight:400;color:#605e5c;">Red = low chlorine</div>
<div class="t" style="left:73.80px;width:800px;text-align:center;top:737.55px;font-size:15.3px;font-weight:400;color:#605e5c;">Orange = good chlorine</div>
<div class="t" style="left:73.80px;width:800px;text-align:center;top:756.55px;font-size:15.3px;font-weight:400;color:#605e5c;">Yellow = high chlorine</div>
<div class="card" style="left:576px;top:351px;width:267.5px;height:150.5px;border-radius:30px;border-width:1.5px;"></div>
<div class="t" style="left:310.60px;width:800px;text-align:center;top:365.64px;font-size:17.2px;font-weight:700;color:#252423;">Date</div>
<div style="position:absolute;left:602px;top:395.3px;width:106.5px;height:30px;box-sizing:border-box;border:1px solid #e9e9e9;background:#fff;"></div>
<div class="t" style="left:612.30px;top:402.27px;font-size:14.8px;font-weight:700;color:#252423;">1/1/1992</div>
<svg style="position:absolute;left:691px;top:403px" width="11" height="11"><rect x="0.7" y="0.7" width="9.6" height="9.6" rx="1.5" fill="none" stroke="#333" stroke-width="1.2"/><rect x="0.7" y="0.7" width="9.6" height="3" fill="#333"/><g fill="#555"><rect x="2.3" y="5.3" width="1.2" height="1.2"/><rect x="4.9" y="5.3" width="1.2" height="1.2"/><rect x="7.5" y="5.3" width="1.2" height="1.2"/><rect x="2.3" y="7.6" width="1.2" height="1.2"/><rect x="4.9" y="7.6" width="1.2" height="1.2"/><rect x="7.5" y="7.6" width="1.2" height="1.2"/></g></svg>
<div style="position:absolute;left:715px;top:395.3px;width:106.5px;height:30px;box-sizing:border-box;border:1px solid #e9e9e9;background:#fff;"></div>
<div class="t" style="left:725.30px;top:402.27px;font-size:14.8px;font-weight:700;color:#252423;">1/1/2030</div>
<svg style="position:absolute;left:804px;top:403px" width="11" height="11"><rect x="0.7" y="0.7" width="9.6" height="9.6" rx="1.5" fill="none" stroke="#333" stroke-width="1.2"/><rect x="0.7" y="0.7" width="9.6" height="3" fill="#333"/><g fill="#555"><rect x="2.3" y="5.3" width="1.2" height="1.2"/><rect x="4.9" y="5.3" width="1.2" height="1.2"/><rect x="7.5" y="5.3" width="1.2" height="1.2"/><rect x="2.3" y="7.6" width="1.2" height="1.2"/><rect x="4.9" y="7.6" width="1.2" height="1.2"/><rect x="7.5" y="7.6" width="1.2" height="1.2"/></g></svg>
<div style="position:absolute;left:632px;top:446.5px;width:163px;height:3px;background:#6e6e6e;"></div>
<div style="position:absolute;box-sizing:border-box;left:605px;top:434px;width:28px;height:28px;border-radius:50%;background:#fff;border:1.3px solid #6a6a6a;"></div>
<div style="position:absolute;box-sizing:border-box;left:794.6px;top:434px;width:28px;height:28px;border-radius:50%;background:#fff;border:1.3px solid #6a6a6a;"></div>
<div class="card" style="left:579.5px;top:513px;width:262.0px;height:270.5px;border-radius:30px;border-width:1.5px;"></div>
<div class="t" style="left:312.00px;width:800px;text-align:center;top:525.74px;font-size:17.2px;font-weight:700;color:#252423;">Samples Collected This</div>
<div class="t" style="left:312.00px;width:800px;text-align:center;top:546.94px;font-size:17.2px;font-weight:700;color:#252423;">Month</div>
<svg style="position:absolute;left:0;top:0" width="1422" height="797"><path d="M596.00 710.70 A116 116 0 0 1 820.28 669.09 L787.14 681.82 A80.5 80.5 0 0 0 631.50 710.70 Z" fill="#118dff"/><path d="M820.28 669.09 A116 116 0 0 1 828.00 710.70 L792.50 710.70 A80.5 80.5 0 0 0 787.14 681.82 Z" fill="#ececec"/></svg>
<div class="t" style="left:311.30px;width:800px;text-align:center;top:672.50px;font-size:36.5px;font-weight:400;color:#6a6a6a;transform:scaleX(0.81);transform-origin:center 0;">121</div>
<div class="t" style="left:201.10px;width:800px;text-align:center;top:720.61px;font-size:17px;font-weight:400;color:#605e5c;transform:scaleX(0.85);transform-origin:center 0;">0</div>
<div class="t" style="left:414.00px;width:800px;text-align:center;top:720.61px;font-size:17px;font-weight:400;color:#605e5c;">137</div>
<div class="card" style="left:847.8px;top:353.5px;width:148.20000000000005px;height:297.0px;border-radius:30px;border-width:1.5px;"></div>
<div class="t" style="left:522.60px;width:800px;text-align:center;top:367.09px;font-size:17.5px;font-weight:700;color:#252423;">Site History</div>
<div style="position:absolute;left:848px;top:390px;width:140px;height:247.5px;overflow:hidden;">
<div style="position:absolute;box-sizing:border-box;left:25.5px;top:8.40px;width:17.5px;height:17.5px;border:1px solid #605e5c;background:#fff;"></div>
<div class="t" style="left:52.10px;top:9.39px;font-size:17.5px;font-weight:400;color:#252423;">500</div>
<div style="position:absolute;box-sizing:border-box;left:25.5px;top:40.60px;width:17.5px;height:17.5px;border:1px solid #605e5c;background:#fff;"></div>
<div class="t" style="left:52.10px;top:41.59px;font-size:17.5px;font-weight:400;color:#252423;">501</div>
<div style="position:absolute;box-sizing:border-box;left:25.5px;top:72.80px;width:17.5px;height:17.5px;border:1px solid #605e5c;background:#fff;"></div>
<div class="t" style="left:52.10px;top:73.79px;font-size:17.5px;font-weight:400;color:#252423;">502</div>
<div style="position:absolute;box-sizing:border-box;left:25.5px;top:105.00px;width:17.5px;height:17.5px;border:1px solid #605e5c;background:#fff;"></div>
<div class="t" style="left:52.10px;top:105.99px;font-size:17.5px;font-weight:400;color:#252423;">503</div>
<div style="position:absolute;box-sizing:border-box;left:25.5px;top:137.20px;width:17.5px;height:17.5px;border:1px solid #605e5c;background:#fff;"></div>
<div class="t" style="left:52.10px;top:138.19px;font-size:17.5px;font-weight:400;color:#252423;">504</div>
<div style="position:absolute;box-sizing:border-box;left:25.5px;top:169.40px;width:17.5px;height:17.5px;border:1px solid #605e5c;background:#fff;"></div>
<div class="t" style="left:52.10px;top:170.39px;font-size:17.5px;font-weight:400;color:#252423;">505</div>
<div style="position:absolute;box-sizing:border-box;left:25.5px;top:201.60px;width:17.5px;height:17.5px;border:1px solid #605e5c;background:#fff;"></div>
<div class="t" style="left:52.10px;top:202.59px;font-size:17.5px;font-weight:400;color:#252423;">506</div>
<div style="position:absolute;box-sizing:border-box;left:25.5px;top:233.80px;width:17.5px;height:17.5px;border:1px solid #605e5c;background:#fff;"></div>
<div class="t" style="left:52.10px;top:234.79px;font-size:17.5px;font-weight:400;color:#252423;">507</div>
</div>
<div style="position:absolute;left:970px;top:391px;width:9.5px;height:22.5px;background:#d8d8d8;"></div>
<div class="card" style="left:853.5px;top:654px;width:137.5px;height:130px;border-radius:30px;border-width:1.5px;"></div>
<div class="t" style="left:523.20px;width:800px;text-align:center;top:667.64px;font-size:17.2px;font-weight:700;color:#252423;">Collected?</div>
<div style="position:absolute;box-sizing:border-box;left:878.9px;top:698.40px;width:17.5px;height:17.5px;border:1px solid #605e5c;background:#fff;"></div>
<div class="t" style="left:905.50px;top:700.04px;font-size:17.2px;font-weight:400;color:#252423;">Collect...</div>
<div style="position:absolute;box-sizing:border-box;left:878.9px;top:730.50px;width:17.5px;height:17.5px;border:1px solid #605e5c;background:#fff;"></div>
<div class="t" style="left:905.50px;top:732.14px;font-size:17.2px;font-weight:400;color:#252423;">Not C...</div>
<div class="card" style="left:1005px;top:351.5px;width:410.5px;height:438.5px;border-radius:30px;border-width:1.5px;"></div>
<div class="t" style="left:811.60px;width:800px;text-align:center;top:365.67px;font-size:17.4px;font-weight:700;color:#252423;">Monthly Sample Status</div>
<div id="map2" style="position:absolute;left:1021.4px;top:389.4px;width:380.6px;height:386.3px;overflow:hidden;background:#edeee8;"><svg width="381" height="387" viewBox="0 0 381 387" style="position:absolute;left:0;top:0">
<g transform="translate(-1.6 -9.5) scale(1.045)">
<rect x="-20" y="-20" width="430" height="430" fill="#ecede6"/>
<ellipse cx="40" cy="180" rx="60" ry="70" fill="#eff0ea"/>
<ellipse cx="210" cy="350" rx="80" ry="45" fill="#eff0e9"/>
<ellipse cx="345" cy="300" rx="50" ry="90" fill="#f0f1eb"/>
<ellipse cx="90" cy="290" rx="70" ry="45" fill="#eff0e9"/>
<ellipse cx="330" cy="20" rx="60" ry="40" fill="#eff0ea"/>
<path d="M0.0 120.0 L20.0 150.0 L25.0 200.0 L40.0 250.0 L30.0 300.0 L60.0 350.0 L90.0 387.0" fill="none" stroke="#dddcd3" stroke-width="1"/>
<path d="M60.0 200.0 L80.0 220.0 L110.0 235.0" fill="none" stroke="#dddcd3" stroke-width="1"/>
<path d="M160.0 230.0 L150.0 270.0 L170.0 300.0 L230.0 330.0 L280.0 320.0" fill="none" stroke="#dddcd3" stroke-width="1"/>
<path d="M300.0 120.0 L320.0 160.0 L360.0 180.0 L386.0 170.0" fill="none" stroke="#dddcd3" stroke-width="1"/>
<path d="M300.0 230.0 L330.0 250.0 L370.0 260.0 L386.0 250.0" fill="none" stroke="#dddcd3" stroke-width="1"/>
<path d="M310.0 340.0 L330.0 360.0 L340.0 387.0" fill="none" stroke="#dddcd3" stroke-width="1"/>
<path d="M100.0 60.0 L70.0 90.0 L60.0 140.0" fill="none" stroke="#dddcd3" stroke-width="1"/>
<path d="M40.0 20.0 L60.0 40.0 L90.0 50.0" fill="none" stroke="#dddcd3" stroke-width="1"/>
<polygon points="252.8,16.6 270.0,20.0 283.0,29.0 290.0,42.0 305.0,61.0 307.0,100.0 292.0,111.0 271.6,110.7 260.3,105.6 257.8,98.0 245.2,93.0 244.0,80.6 236.4,78.0 236.4,73.0 249.0,69.3 256.5,61.7 250.2,49.2 251.5,39.2 256.5,36.6 259.0,30.4 254.0,24.0" fill="#d9e5c9"/>
<polygon points="17.0,55.0 22.0,56.0 27.0,70.0 28.0,96.0 34.0,104.0 39.0,101.0 45.0,104.0 46.0,112.0 38.0,117.0 27.0,123.0 21.0,140.0 9.0,152.0 -2.0,164.0 -2.0,90.0 6.0,88.0 12.0,82.0 15.0,66.0" fill="#b3ddf6"/>
<polygon points="295.4,282.4 305.0,285.0 315.0,293.0 330.0,300.0 338.0,303.0 332.0,308.0 318.0,307.5 308.0,302.0 300.0,295.0" fill="#b3ddf6"/>
<polygon points="50.0,373.0 60.0,378.0 70.0,368.0 78.0,370.0 75.0,390.0 50.0,390.0" fill="#b3ddf6"/>
<polygon points="100.4,377.7 107.9,372.7 106.6,390.0 99.0,390.0" fill="#b3ddf6"/>
<polygon points="45.2,269.8 72.8,247.2 67.8,262.3 50.2,279.8" fill="#dfe8d2"/>
<polygon points="32.6,310.0 49.0,302.4 50.2,307.5 35.0,312.5" fill="#dfe8d2"/>
<polygon points="-2.0,210.0 15.0,206.0 33.0,205.0 26.0,212.0 10.0,220.0 -2.0,226.0" fill="#b3ddf6"/>
<polygon points="-2.0,268.0 12.0,270.0 30.0,272.0 24.0,277.0 8.0,277.0 -2.0,280.0" fill="#b3ddf6"/>
<polygon points="-2.0,298.0 6.0,300.0 14.0,308.0 10.0,313.0 -2.0,310.0" fill="#b3ddf6"/>
<path d="M28 0 L38 45 L25.3 59 L18 62" fill="none" stroke="#9fd0ec" stroke-width="1"/>
<path d="M240 95 L270 100 L300 96 L330 92 L360 95 L386 100" fill="none" stroke="#9fd0ec" stroke-width="1"/>
<path d="M150 320 L140 360 L135 387" fill="none" stroke="#9fd0ec" stroke-width="1"/>
<path d="M18.3 0.0 L28.1 5.6 L42.2 6.3 L63.3 2.1 L98.5 2.1 L119.5 5.6 L133.6 11.3 L154.7 21.1 L168.8 31.0 L181.4 49.2 L184.2 56.3" fill="none" stroke="#c6c7c5" stroke-width="1.8" stroke-linejoin="round"/>
<path d="M0.0 5.6 L9.8 0.0" fill="none" stroke="#c6c7c5" stroke-width="1.6" stroke-linejoin="round"/>
<path d="M257.8 9.0 L298.0 49.0 L345.6 89.0 L365.7 104.4 L386.0 110.0" fill="none" stroke="#c6c7c5" stroke-width="1.8" stroke-linejoin="round"/>
<path d="M365.7 104.4 L352.0 122.0 L340.0 140.0 L336.0 160.0 L330.0 182.0 L312.0 200.0 L295.4 209.6" fill="none" stroke="#c6c7c5" stroke-width="1.6" stroke-linejoin="round"/>
<path d="M0.0 366.4 L32.6 357.6 L140.5 294.9 L200.8 254.8 L215.0 245.0" fill="none" stroke="#c3c4c3" stroke-width="2.0" stroke-linejoin="round"/>
<path d="M295.4 209.6 L340.0 211.0 L386.0 212.0" fill="none" stroke="#c6c7c5" stroke-width="1.6" stroke-linejoin="round"/>
<path d="M0.0 239.7 L60.0 230.0 L115.4 224.6 L195.7 222.0 L210.0 222.0" fill="none" stroke="#ffffff" stroke-width="2.8" stroke-linejoin="round"/>
<path d="M115.4 199.0 L118.0 257.0 L135.5 287.4 L150.6 303.7 L175.7 305.0 L173.0 332.5 L168.0 350.0 L190.7 387.0" fill="none" stroke="#fbfbfb" stroke-width="2.4" stroke-linejoin="round"/>
<path d="M112.5 7.0 L111.1 28.1 L116.7 42.2 L116.7 57.7" fill="none" stroke="#fafafa" stroke-width="1.6" stroke-linejoin="round"/>
<path d="M132.2 14.0 L140.6 35.2 L146.3 57.7" fill="none" stroke="#fafafa" stroke-width="1.6" stroke-linejoin="round"/>
<path d="M350.6 -1.0 L351.9 94.4 L368.2 117.0 L386.0 130.0" fill="none" stroke="#ffffff" stroke-width="2.5" stroke-linejoin="round"/>
<path d="M386.0 237.0 L345.6 312.5 L330.0 340.0" fill="none" stroke="#ffffff" stroke-width="2.5" stroke-linejoin="round"/>
<path d="M0.0 64.0 L87.0 59.0" fill="none" stroke="#9a9a9a" stroke-width="1.3" stroke-dasharray="5 4"/>
<polygon points="86.8,58.0 118.5,57.7 183.4,56.5 187.0,57.0 198.8,17.8 210.0,21.6 247.7,12.8 252.8,16.6 254.0,24.0 259.0,30.4 256.5,36.6 251.5,39.2 250.2,49.2 256.5,61.7 249.0,69.3 236.4,73.0 236.4,78.0 244.0,80.6 245.2,93.0 257.8,98.0 260.3,105.6 271.6,110.7 280.4,120.7 285.4,127.0 286.6,139.5 284.0,160.9 276.6,174.7 275.3,189.7 285.4,197.0 295.4,209.6 295.4,219.6 290.4,232.2 290.4,244.7 280.4,249.7 270.3,262.3 265.3,269.8 255.3,274.8 252.8,292.4 262.8,302.4 280.0,307.8 280.0,343.6 284.8,362.8 270.4,365.4 248.8,353.2 246.4,341.3 238.0,312.5 210.3,313.7 212.6,295.0 210.0,274.8 205.0,262.3 202.6,244.7 197.5,237.0 195.0,212.0 180.1,207.1 170.3,206.4 168.9,202.9 159.0,201.5 157.6,198.7 147.8,197.3 136.5,200.0 126.0,204.3 121.0,195.9 114.0,193.0 102.8,181.0 80.3,186.7 65.5,191.0 62.0,197.3 50.7,202.9 50.0,187.4 46.5,193.7 33.9,187.2 33.9,164.6 51.5,163.3 51.5,136.9 62.8,125.6 61.6,115.6 72.9,116.8 75.4,111.8 69.1,104.3 77.9,101.8 80.4,87.9 78.8,85.8 90.0,85.1 96.7,77.9 86.7,69.1" fill="#e5dded" fill-opacity="0.93"/>
<polygon points="136.5,200.0 126.0,204.3 121.0,195.9 114.0,193.0 102.8,181.0 80.3,186.7 65.5,191.0 62.0,197.3 50.7,202.9 50.0,187.4 46.5,193.7 33.9,187.2 33.9,164.6 51.5,163.3 51.5,136.9 62.8,125.6 61.6,115.6 72.9,116.8 75.4,111.8 69.1,104.3 77.9,101.8 80.4,87.9 78.8,85.8 90.0,85.1 96.7,77.9 86.7,69.1 86.8,58.0 118.5,57.7 122.4,67.5 122.4,78.8 118.1,80.9 132.2,94.2 137.0,110.0 138.3,129.5 144.5,159.6 139.5,174.7 142.0,200.0" fill="#dbe3ee"/>
<polygon points="260.3,229.7 290.4,232.2 290.4,244.7 280.4,249.7 270.3,262.3 265.3,269.8 255.3,274.8 252.8,292.4 262.8,302.4 280.0,307.8 280.0,343.6 284.8,362.8 270.4,365.4 248.8,353.2 246.4,341.3 238.0,312.5 237.7,295.0 239.0,279.8 247.7,272.3 250.2,262.3 257.8,244.7" fill="#dcf0d3"/>
<path d="M118.5 57.7 L122.4 67.5 L122.4 78.8 L118.1 80.9 L132.2 94.2 L137.0 110.0 L138.3 129.5 L144.5 159.6 L139.5 174.7 L142.0 200.0" fill="none" stroke="#8a8a93" stroke-width="1.2"/>
<path d="M260.3 229.7 L238.0 312.5 L237.7 295.0 L239.0 279.8 L247.7 272.3 L250.2 262.3 L257.8 244.7" fill="none" stroke="#8a8a93" stroke-width="0.8"/>
<polygon points="215.0,93.0 222.0,90.0 232.0,93.0 238.0,99.0 234.0,106.0 226.0,108.0 218.0,106.0 214.0,100.0" fill="#bcd9f2"/>
<path d="M99.0 61.0 L100.6 74.0 L90.0 105.0 L80.0 141.0 L52.0 241.0 L7.5 387.0" fill="none" stroke="#8e8e96" stroke-width="1.2" stroke-dasharray="5 4"/>
<polygon points="86.8,58.0 118.5,57.7 183.4,56.5 187.0,57.0 198.8,17.8 210.0,21.6 247.7,12.8 252.8,16.6 254.0,24.0 259.0,30.4 256.5,36.6 251.5,39.2 250.2,49.2 256.5,61.7 249.0,69.3 236.4,73.0 236.4,78.0 244.0,80.6 245.2,93.0 257.8,98.0 260.3,105.6 271.6,110.7 280.4,120.7 285.4,127.0 286.6,139.5 284.0,160.9 276.6,174.7 275.3,189.7 285.4,197.0 295.4,209.6 295.4,219.6 290.4,232.2 290.4,244.7 280.4,249.7 270.3,262.3 265.3,269.8 255.3,274.8 252.8,292.4 262.8,302.4 280.0,307.8 280.0,343.6 284.8,362.8 270.4,365.4 248.8,353.2 246.4,341.3 238.0,312.5 210.3,313.7 212.6,295.0 210.0,274.8 205.0,262.3 202.6,244.7 197.5,237.0 195.0,212.0 180.1,207.1 170.3,206.4 168.9,202.9 159.0,201.5 157.6,198.7 147.8,197.3 136.5,200.0 126.0,204.3 121.0,195.9 114.0,193.0 102.8,181.0 80.3,186.7 65.5,191.0 62.0,197.3 50.7,202.9 50.0,187.4 46.5,193.7 33.9,187.2 33.9,164.6 51.5,163.3 51.5,136.9 62.8,125.6 61.6,115.6 72.9,116.8 75.4,111.8 69.1,104.3 77.9,101.8 80.4,87.9 78.8,85.8 90.0,85.1 96.7,77.9 86.7,69.1" fill="none" stroke="#6f6f78" stroke-width="1.7" stroke-linejoin="round"/>
<circle cx="159.3" cy="244.2" r="2.6" fill="#fff" stroke="#8c8c8c" stroke-width="1.2"/>
<text x="164" y="239.5" font-family="Liberation Sans" font-size="12.5" textLength="24" lengthAdjust="spacingAndGlyphs" fill="#4a4a4a" stroke="#fff" stroke-width="2.5" paint-order="stroke">Apex</text>
<circle cx="181" cy="354" r="2.6" fill="#fff" stroke="#8c8c8c" stroke-width="1.2"/>
<text x="184.5" y="349.5" font-family="Liberation Sans" font-size="12.5" textLength="63" lengthAdjust="spacingAndGlyphs" fill="#555" stroke="#fff" stroke-width="2.5" paint-order="stroke">Holly Springs</text>
<text x="245" y="161" font-family="Liberation Sans" font-size="13.5" textLength="24.5" lengthAdjust="spacingAndGlyphs" fill="#5f5f66">Cary</text>
<text x="366" y="100" font-family="Liberation Sans" font-size="12" fill="#6a9bc0" transform="rotate(25 366 100)">Crabtree</text>
<path d="M245.5 2 h21 v9 q0 4 -10.5 6 q-10.5 -2 -10.5 -6 z" fill="#fff" stroke="#999" stroke-width="1"/>
<text x="256" y="12" font-family="Liberation Sans" font-size="9.5" font-weight="700" text-anchor="middle" fill="#333">70</text>
<path d="M13 353 h20.5 v9 q0 4 -10.25 6 q-10.25 -2 -10.25 -6 z" fill="#fff" stroke="#999" stroke-width="1"/>
<text x="23.2" y="364" font-family="Liberation Sans" font-size="9.5" font-weight="700" text-anchor="middle" fill="#333">1</text>
</g>
<circle cx="110.0" cy="61.1" r="4.6" fill="#14e014" stroke="#1a1a1a" stroke-width="1.3"/>
<circle cx="116.3" cy="61.1" r="4.6" fill="#14e014" stroke="#1a1a1a" stroke-width="1.3"/>
<circle cx="113.8" cy="69.4" r="4.6" fill="#14e014" stroke="#1a1a1a" stroke-width="1.3"/>
<circle cx="161.5" cy="58.6" r="4.6" fill="#14e014" stroke="#1a1a1a" stroke-width="1.3"/>
<circle cx="182.8" cy="64.8" r="4.6" fill="#14e014" stroke="#1a1a1a" stroke-width="1.3"/>
<circle cx="195.3" cy="71.1" r="4.6" fill="#14e014" stroke="#1a1a1a" stroke-width="1.3"/>
<circle cx="176.5" cy="74.9" r="4.6" fill="#14e014" stroke="#1a1a1a" stroke-width="1.3"/>
<circle cx="87.4" cy="86.2" r="4.6" fill="#14e014" stroke="#1a1a1a" stroke-width="1.3"/>
<circle cx="110.0" cy="87.4" r="4.6" fill="#14e014" stroke="#1a1a1a" stroke-width="1.3"/>
<circle cx="126.3" cy="91.2" r="4.6" fill="#14e014" stroke="#1a1a1a" stroke-width="1.3"/>
<circle cx="150.2" cy="91.2" r="4.6" fill="#14e014" stroke="#1a1a1a" stroke-width="1.3"/>
<circle cx="169.0" cy="93.0" r="4.6" fill="#14e014" stroke="#1a1a1a" stroke-width="1.3"/>
<circle cx="180.3" cy="95.0" r="4.6" fill="#14e014" stroke="#1a1a1a" stroke-width="1.3"/>
<circle cx="185.3" cy="82.4" r="4.6" fill="#14e014" stroke="#1a1a1a" stroke-width="1.3"/>
<circle cx="192.8" cy="87.4" r="4.6" fill="#14e014" stroke="#1a1a1a" stroke-width="1.3"/>
<circle cx="157.7" cy="98.7" r="4.6" fill="#14e014" stroke="#1a1a1a" stroke-width="1.3"/>
<circle cx="162.7" cy="105.0" r="4.6" fill="#14e014" stroke="#1a1a1a" stroke-width="1.3"/>
<circle cx="194.1" cy="96.2" r="4.6" fill="#14e014" stroke="#1a1a1a" stroke-width="1.3"/>
<circle cx="100.0" cy="106.2" r="4.6" fill="#14e014" stroke="#1a1a1a" stroke-width="1.3"/>
<circle cx="102.5" cy="106.2" r="4.6" fill="#14e014" stroke="#1a1a1a" stroke-width="1.3"/>
<circle cx="121.3" cy="103.7" r="4.6" fill="#14e014" stroke="#1a1a1a" stroke-width="1.3"/>
<circle cx="136.4" cy="105.0" r="4.6" fill="#14e014" stroke="#1a1a1a" stroke-width="1.3"/>
<circle cx="145.1" cy="112.5" r="4.6" fill="#14e014" stroke="#1a1a1a" stroke-width="1.3"/>
<circle cx="136.4" cy="113.8" r="4.6" fill="#14e014" stroke="#1a1a1a" stroke-width="1.3"/>
<circle cx="121.3" cy="115.0" r="4.6" fill="#14e014" stroke="#1a1a1a" stroke-width="1.3"/>
<circle cx="108.8" cy="116.3" r="4.6" fill="#14e014" stroke="#1a1a1a" stroke-width="1.3"/>
<circle cx="194.1" cy="105.0" r="4.6" fill="#14e014" stroke="#1a1a1a" stroke-width="1.3"/>
<circle cx="191.6" cy="115.0" r="4.6" fill="#14e014" stroke="#1a1a1a" stroke-width="1.3"/>
<circle cx="78.6" cy="123.8" r="4.6" fill="#14e014" stroke="#1a1a1a" stroke-width="1.3"/>
<circle cx="93.7" cy="131.3" r="4.6" fill="#14e014" stroke="#1a1a1a" stroke-width="1.3"/>
<circle cx="103.7" cy="128.8" r="4.6" fill="#14e014" stroke="#1a1a1a" stroke-width="1.3"/>
<circle cx="113.8" cy="133.8" r="4.6" fill="#14e014" stroke="#1a1a1a" stroke-width="1.3"/>
<circle cx="142.6" cy="127.6" r="4.6" fill="#14e014" stroke="#1a1a1a" stroke-width="1.3"/>
<circle cx="148.9" cy="141.4" r="4.6" fill="#14e014" stroke="#1a1a1a" stroke-width="1.3"/>
<circle cx="106.3" cy="143.9" r="4.6" fill="#14e014" stroke="#1a1a1a" stroke-width="1.3"/>
<circle cx="117.5" cy="148.9" r="4.6" fill="#14e014" stroke="#1a1a1a" stroke-width="1.3"/>
<circle cx="127.6" cy="145.1" r="4.6" fill="#14e014" stroke="#1a1a1a" stroke-width="1.3"/>
<circle cx="130.1" cy="150.2" r="4.6" fill="#14e014" stroke="#1a1a1a" stroke-width="1.3"/>
<circle cx="111.3" cy="153.9" r="4.6" fill="#14e014" stroke="#1a1a1a" stroke-width="1.3"/>
<circle cx="87.4" cy="155.2" r="4.6" fill="#14e014" stroke="#1a1a1a" stroke-width="1.3"/>
<circle cx="103.7" cy="165.2" r="4.6" fill="#14e014" stroke="#1a1a1a" stroke-width="1.3"/>
<circle cx="143.9" cy="165.2" r="4.6" fill="#14e014" stroke="#1a1a1a" stroke-width="1.3"/>
<circle cx="165.2" cy="162.7" r="4.6" fill="#14e014" stroke="#1a1a1a" stroke-width="1.3"/>
<circle cx="170.2" cy="168.2" r="4.6" fill="#14e014" stroke="#1a1a1a" stroke-width="1.3"/>
<circle cx="191.6" cy="162.7" r="4.6" fill="#14e014" stroke="#1a1a1a" stroke-width="1.3"/>
<circle cx="196.6" cy="168.2" r="4.6" fill="#14e014" stroke="#1a1a1a" stroke-width="1.3"/>
<circle cx="84.9" cy="176.5" r="4.6" fill="#14e014" stroke="#1a1a1a" stroke-width="1.3"/>
<circle cx="107.5" cy="186.6" r="4.6" fill="#14e014" stroke="#1a1a1a" stroke-width="1.3"/>
<circle cx="138.9" cy="187.8" r="4.6" fill="#14e014" stroke="#1a1a1a" stroke-width="1.3"/>
<circle cx="157.7" cy="185.3" r="4.6" fill="#14e014" stroke="#1a1a1a" stroke-width="1.3"/>
<circle cx="167.7" cy="180.3" r="4.6" fill="#14e014" stroke="#1a1a1a" stroke-width="1.3"/>
<circle cx="174.0" cy="185.8" r="4.6" fill="#14e014" stroke="#1a1a1a" stroke-width="1.3"/>
<circle cx="184.0" cy="186.6" r="4.6" fill="#14e014" stroke="#1a1a1a" stroke-width="1.3"/>
<circle cx="224.5" cy="19.6" r="4.6" fill="#14e014" stroke="#1a1a1a" stroke-width="1.3"/>
<circle cx="208.2" cy="29.2" r="4.6" fill="#14e014" stroke="#1a1a1a" stroke-width="1.3"/>
<circle cx="210.7" cy="54.8" r="4.6" fill="#14e014" stroke="#1a1a1a" stroke-width="1.3"/>
<circle cx="224.5" cy="56.1" r="4.6" fill="#14e014" stroke="#1a1a1a" stroke-width="1.3"/>
<circle cx="201.9" cy="65.3" r="4.6" fill="#14e014" stroke="#1a1a1a" stroke-width="1.3"/>
<circle cx="230.8" cy="72.4" r="4.6" fill="#14e014" stroke="#1a1a1a" stroke-width="1.3"/>
<circle cx="233.3" cy="77.4" r="4.6" fill="#14e014" stroke="#1a1a1a" stroke-width="1.3"/>
<circle cx="222.0" cy="81.2" r="4.6" fill="#14e014" stroke="#1a1a1a" stroke-width="1.3"/>
<circle cx="212.0" cy="92.4" r="4.6" fill="#14e014" stroke="#1a1a1a" stroke-width="1.3"/>
<circle cx="181.9" cy="95.0" r="4.6" fill="#14e014" stroke="#1a1a1a" stroke-width="1.3"/>
<circle cx="204.4" cy="107.5" r="4.6" fill="#14e014" stroke="#1a1a1a" stroke-width="1.3"/>
<circle cx="218.2" cy="110.0" r="4.6" fill="#14e014" stroke="#1a1a1a" stroke-width="1.3"/>
<circle cx="258.4" cy="100.0" r="4.6" fill="#14e014" stroke="#1a1a1a" stroke-width="1.3"/>
<circle cx="281.0" cy="113.8" r="4.6" fill="#14e014" stroke="#1a1a1a" stroke-width="1.3"/>
<circle cx="239.6" cy="117.6" r="4.6" fill="#14e014" stroke="#1a1a1a" stroke-width="1.3"/>
<circle cx="213.2" cy="126.3" r="4.6" fill="#14e014" stroke="#1a1a1a" stroke-width="1.3"/>
<circle cx="222.0" cy="123.8" r="4.6" fill="#14e014" stroke="#1a1a1a" stroke-width="1.3"/>
<circle cx="229.5" cy="126.3" r="4.6" fill="#14e014" stroke="#1a1a1a" stroke-width="1.3"/>
<circle cx="205.7" cy="133.9" r="4.6" fill="#14e014" stroke="#1a1a1a" stroke-width="1.3"/>
<circle cx="243.3" cy="130.1" r="4.6" fill="#14e014" stroke="#1a1a1a" stroke-width="1.3"/>
<circle cx="265.9" cy="131.3" r="4.6" fill="#14e014" stroke="#1a1a1a" stroke-width="1.3"/>
<circle cx="233.3" cy="143.9" r="4.6" fill="#14e014" stroke="#1a1a1a" stroke-width="1.3"/>
<circle cx="247.1" cy="147.6" r="4.6" fill="#14e014" stroke="#1a1a1a" stroke-width="1.3"/>
<circle cx="205.7" cy="151.4" r="4.6" fill="#14e014" stroke="#1a1a1a" stroke-width="1.3"/>
<circle cx="218.2" cy="151.4" r="4.6" fill="#14e014" stroke="#1a1a1a" stroke-width="1.3"/>
<circle cx="222.0" cy="156.4" r="4.6" fill="#14e014" stroke="#1a1a1a" stroke-width="1.3"/>
<circle cx="214.5" cy="158.9" r="4.6" fill="#14e014" stroke="#1a1a1a" stroke-width="1.3"/>
<circle cx="239.6" cy="156.4" r="4.6" fill="#14e014" stroke="#1a1a1a" stroke-width="1.3"/>
<circle cx="252.1" cy="157.7" r="4.6" fill="#14e014" stroke="#1a1a1a" stroke-width="1.3"/>
<circle cx="283.5" cy="155.7" r="4.6" fill="#14e014" stroke="#1a1a1a" stroke-width="1.3"/>
<circle cx="193.1" cy="162.7" r="4.6" fill="#14e014" stroke="#1a1a1a" stroke-width="1.3"/>
<circle cx="198.2" cy="169.0" r="4.6" fill="#14e014" stroke="#1a1a1a" stroke-width="1.3"/>
<circle cx="235.8" cy="162.7" r="4.6" fill="#14e014" stroke="#1a1a1a" stroke-width="1.3"/>
<circle cx="249.6" cy="162.2" r="4.6" fill="#14e014" stroke="#1a1a1a" stroke-width="1.3"/>
<circle cx="223.3" cy="171.5" r="4.6" fill="#14e014" stroke="#1a1a1a" stroke-width="1.3"/>
<circle cx="279.7" cy="167.2" r="4.6" fill="#14e014" stroke="#1a1a1a" stroke-width="1.3"/>
<circle cx="223.3" cy="181.5" r="4.6" fill="#14e014" stroke="#1a1a1a" stroke-width="1.3"/>
<circle cx="248.4" cy="175.3" r="4.6" fill="#14e014" stroke="#1a1a1a" stroke-width="1.3"/>
<circle cx="248.4" cy="182.8" r="4.6" fill="#14e014" stroke="#1a1a1a" stroke-width="1.3"/>
<circle cx="260.9" cy="180.3" r="4.6" fill="#14e014" stroke="#1a1a1a" stroke-width="1.3"/>
<circle cx="268.4" cy="176.5" r="4.6" fill="#14e014" stroke="#1a1a1a" stroke-width="1.3"/>
<circle cx="268.4" cy="185.3" r="4.6" fill="#14e014" stroke="#1a1a1a" stroke-width="1.3"/>
<circle cx="279.7" cy="182.8" r="4.6" fill="#14e014" stroke="#1a1a1a" stroke-width="1.3"/>
<circle cx="243.3" cy="191.6" r="4.6" fill="#14e014" stroke="#1a1a1a" stroke-width="1.3"/>
<circle cx="250.9" cy="194.1" r="4.6" fill="#14e014" stroke="#1a1a1a" stroke-width="1.3"/>
<circle cx="269.7" cy="191.6" r="4.6" fill="#14e014" stroke="#1a1a1a" stroke-width="1.3"/>
<circle cx="213.2" cy="196.6" r="4.6" fill="#14e014" stroke="#1a1a1a" stroke-width="1.3"/>
<circle cx="294.8" cy="190.3" r="4.6" fill="#14e014" stroke="#1a1a1a" stroke-width="1.3"/>
<circle cx="286.0" cy="196.6" r="4.6" fill="#14e014" stroke="#1a1a1a" stroke-width="1.3"/>
<circle cx="201.9" cy="202.9" r="4.6" fill="#14e014" stroke="#1a1a1a" stroke-width="1.3"/>
<circle cx="195.7" cy="206.6" r="4.6" fill="#14e014" stroke="#1a1a1a" stroke-width="1.3"/>
<circle cx="210.7" cy="205.4" r="4.6" fill="#14e014" stroke="#1a1a1a" stroke-width="1.3"/>
<circle cx="215.7" cy="214.2" r="4.6" fill="#14e014" stroke="#1a1a1a" stroke-width="1.3"/>
<circle cx="232.0" cy="204.7" r="4.6" fill="#14e014" stroke="#1a1a1a" stroke-width="1.3"/>
<circle cx="245.8" cy="207.2" r="4.6" fill="#14e014" stroke="#1a1a1a" stroke-width="1.3"/>
<circle cx="254.6" cy="206.6" r="4.6" fill="#14e014" stroke="#1a1a1a" stroke-width="1.3"/>
<circle cx="267.2" cy="190.4" r="4.6" fill="#14e014" stroke="#1a1a1a" stroke-width="1.3"/>
<circle cx="286.0" cy="209.2" r="4.6" fill="#14e014" stroke="#1a1a1a" stroke-width="1.3"/>
<circle cx="297.3" cy="207.2" r="4.6" fill="#14e014" stroke="#1a1a1a" stroke-width="1.3"/>
<circle cx="204.4" cy="226.2" r="4.6" fill="#14e014" stroke="#1a1a1a" stroke-width="1.3"/>
<circle cx="205.7" cy="234.3" r="4.6" fill="#14e014" stroke="#1a1a1a" stroke-width="1.3"/>
<circle cx="234.6" cy="228.0" r="4.6" fill="#14e014" stroke="#1a1a1a" stroke-width="1.3"/>
<circle cx="229.5" cy="238.0" r="4.6" fill="#14e014" stroke="#1a1a1a" stroke-width="1.3"/>
<circle cx="233.3" cy="238.0" r="4.6" fill="#14e014" stroke="#1a1a1a" stroke-width="1.3"/>
<circle cx="245.8" cy="233.8" r="4.6" fill="#14e014" stroke="#1a1a1a" stroke-width="1.3"/>
<circle cx="252.1" cy="234.3" r="4.6" fill="#14e014" stroke="#1a1a1a" stroke-width="1.3"/>
<circle cx="252.1" cy="239.3" r="4.6" fill="#14e014" stroke="#1a1a1a" stroke-width="1.3"/>
<circle cx="267.2" cy="228.0" r="4.6" fill="#14e014" stroke="#1a1a1a" stroke-width="1.3"/>
<circle cx="269.7" cy="223.7" r="4.6" fill="#14e014" stroke="#1a1a1a" stroke-width="1.3"/>
<circle cx="277.2" cy="233.8" r="4.6" fill="#14e014" stroke="#1a1a1a" stroke-width="1.3"/>
<circle cx="297.3" cy="226.8" r="4.6" fill="#14e014" stroke="#1a1a1a" stroke-width="1.3"/>
<circle cx="311.1" cy="238.8" r="4.6" fill="#14e014" stroke="#1a1a1a" stroke-width="1.3"/>
<circle cx="217.0" cy="242.3" r="4.6" fill="#14e014" stroke="#1a1a1a" stroke-width="1.3"/>
<circle cx="273.4" cy="252.3" r="4.6" fill="#14e014" stroke="#1a1a1a" stroke-width="1.3"/>
<circle cx="229.5" cy="283.2" r="4.6" fill="#14e014" stroke="#1a1a1a" stroke-width="1.3"/>
<circle cx="240.8" cy="287.0" r="4.6" fill="#14e014" stroke="#1a1a1a" stroke-width="1.3"/>
<circle cx="228.3" cy="299.0" r="4.6" fill="#14e014" stroke="#1a1a1a" stroke-width="1.3"/>
<circle cx="230.8" cy="302.0" r="4.6" fill="#14e014" stroke="#1a1a1a" stroke-width="1.3"/>
<circle cx="254.6" cy="306.6" r="4.6" fill="#14e014" stroke="#1a1a1a" stroke-width="1.3"/>
<circle cx="267.2" cy="303.3" r="4.6" fill="#14e014" stroke="#1a1a1a" stroke-width="1.3"/>
<circle cx="270.4" cy="338.4" r="4.6" fill="#14e014" stroke="#1a1a1a" stroke-width="1.3"/>
<circle cx="279.7" cy="359.2" r="4.6" fill="#14e014" stroke="#1a1a1a" stroke-width="1.3"/>
<circle cx="172.7" cy="187.9" r="4.6" fill="#14e014" stroke="#1a1a1a" stroke-width="1.3"/>
<circle cx="136.4" cy="207.9" r="4.6" fill="#14e014" stroke="#1a1a1a" stroke-width="1.3"/>
<circle cx="89.9" cy="216.2" r="4.6" fill="#14e014" stroke="#1a1a1a" stroke-width="1.3"/>
<circle cx="105.0" cy="82.4" r="4.6" fill="#ea5b63" stroke="#1a1a1a" stroke-width="1.3"/>
<circle cx="172.7" cy="130.1" r="4.6" fill="#ea5b63" stroke="#1a1a1a" stroke-width="1.3"/>
<circle cx="185.3" cy="180.3" r="4.6" fill="#ea5b63" stroke="#1a1a1a" stroke-width="1.3"/>
<circle cx="190.3" cy="194.1" r="4.6" fill="#ea5b63" stroke="#1a1a1a" stroke-width="1.3"/>
<circle cx="210.7" cy="65.3" r="4.6" fill="#ea5b63" stroke="#1a1a1a" stroke-width="1.3"/>
<circle cx="232.5" cy="103.0" r="4.6" fill="#ea5b63" stroke="#1a1a1a" stroke-width="1.3"/>
<circle cx="258.4" cy="121.3" r="4.6" fill="#ea5b63" stroke="#1a1a1a" stroke-width="1.3"/>
<circle cx="260.4" cy="165.2" r="4.6" fill="#ea5b63" stroke="#1a1a1a" stroke-width="1.3"/>
<circle cx="287.2" cy="203.7" r="4.6" fill="#ea5b63" stroke="#1a1a1a" stroke-width="1.3"/>
<circle cx="252.1" cy="218.7" r="4.6" fill="#ea5b63" stroke="#1a1a1a" stroke-width="1.3"/>
<circle cx="234.6" cy="243.8" r="4.6" fill="#ea5b63" stroke="#1a1a1a" stroke-width="1.3"/>
<circle cx="230.8" cy="251.3" r="4.6" fill="#ea5b63" stroke="#1a1a1a" stroke-width="1.3"/>
<circle cx="246.3" cy="250.6" r="4.6" fill="#ea5b63" stroke="#1a1a1a" stroke-width="1.3"/>
<circle cx="253.4" cy="261.9" r="4.6" fill="#ea5b63" stroke="#1a1a1a" stroke-width="1.3"/>
<circle cx="230.3" cy="268.2" r="4.6" fill="#ea5b63" stroke="#1a1a1a" stroke-width="1.3"/>
<circle cx="247.1" cy="271.4" r="4.6" fill="#ea5b63" stroke="#1a1a1a" stroke-width="1.3"/>
<circle cx="265.9" cy="278.2" r="4.6" fill="#ea5b63" stroke="#1a1a1a" stroke-width="1.3"/>
<path d="M329 341 h19 v8 q0 4 -9.5 6 q-9.5 -2 -9.5 -6 z" fill="#fff" stroke="#999" stroke-width="1"/>
<text x="338.5" y="350" font-family="Liberation Sans" font-size="8.5" font-weight="700" text-anchor="middle" fill="#333">401</text>
<text x="326" y="372.5" font-family="Liberation Sans" font-size="26" font-weight="700" textLength="45" lengthAdjust="spacingAndGlyphs" fill="#fff" stroke="#9a9a9a" stroke-width="2.2" paint-order="stroke">esri</text>
<text x="328" y="355" font-family="Liberation Sans" font-size="6" font-weight="700" textLength="38" lengthAdjust="spacingAndGlyphs" fill="#fff" stroke="#999" stroke-width="1.2" paint-order="stroke">POWERED BY</text><circle cx="370" cy="353" r="2.5" fill="#fff" stroke="#999" stroke-width="0.8"/>
</svg></div>
<div style="position:absolute;left:1030.5px;top:399px;width:35.5px;height:35.5px;border-radius:6px;background:#127a63;"></div>
<div style="position:absolute;left:1039.5px;top:408.3px;width:17.5px;height:1.7px;background:#ffffff;"></div>
<div style="position:absolute;left:1039.5px;top:415.4px;width:17.5px;height:1.7px;background:#ffffff;"></div>
<div style="position:absolute;left:1039.5px;top:422.6px;width:17.5px;height:1.7px;background:#ffffff;"></div>
</body></html>
